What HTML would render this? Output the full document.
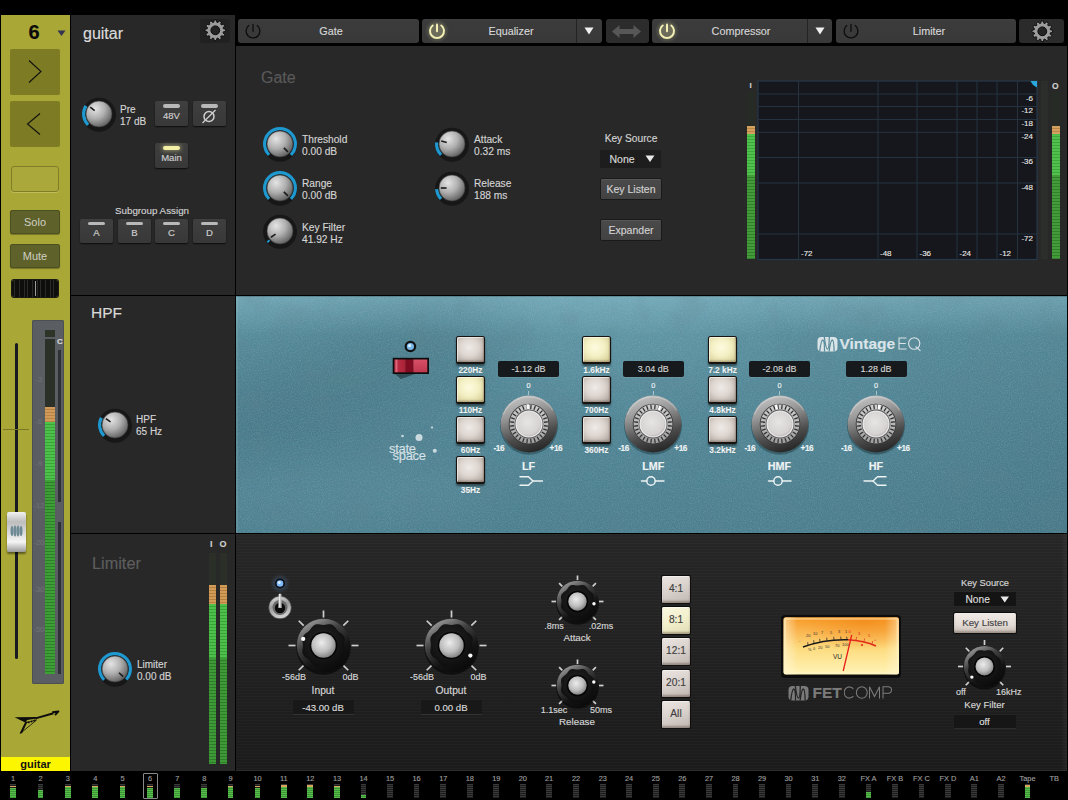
<!DOCTYPE html>
<html><head><meta charset="utf-8">
<style>
*{box-sizing:border-box;margin:0;padding:0}
html,body{width:1068px;height:800px;overflow:hidden;background:#000;font-family:"Liberation Sans",sans-serif}
.a{position:absolute}
.panel{position:absolute;background:#282828}
.strip{left:1px;top:15px;width:69px;height:742px;background:#a9a736}
.txt{position:absolute;white-space:nowrap;line-height:1;-webkit-text-stroke:0.15px currentColor}
</style></head>
<body>
<div class="panel" style="left:71px;top:15px;width:164px;height:280px"></div>
<div class="panel" style="left:71px;top:296px;width:164px;height:237px"></div>
<div class="panel" style="left:71px;top:534px;width:164px;height:237px"></div>
<div class="panel" style="left:236px;top:46px;width:831px;height:249px"></div>
<!-- LEFT STRIP -->
<div class="a strip"></div>
<div class="txt" style="left:22px;top:21.8px;width:24px;text-align:center;font-size:20px;font-weight:bold;color:#0a0a0a">6</div>
<svg class="a" style="left:57px;top:29.8px" width="9" height="7"><path d="M0.5 0.5 L8.5 0.5 L4.5 6 Z" fill="#353452"/></svg>
<div class="a" style="left:10px;top:49px;width:50px;height:46px;background:#7d7b24;border-radius:2px"></div>
<svg class="a" style="left:10px;top:49px" width="50" height="46"><path d="M19 11.5 L31 22.5 L19 33.5" fill="none" stroke="#111" stroke-width="1.1"/></svg>
<div class="a" style="left:10px;top:101px;width:50px;height:46px;background:#7d7b24;border-radius:2px"></div>
<svg class="a" style="left:10px;top:101px" width="50" height="46"><path d="M30 12.5 L17.5 23 L30 33.5" fill="none" stroke="#111" stroke-width="1.1"/></svg>
<div class="a" style="left:11px;top:166px;width:48px;height:26px;background:#aaa83a;border:1.5px solid #7f7d28;border-radius:3px;box-shadow:0 1px 0 rgba(255,255,200,.25)"></div>
<div class="a" style="left:10px;top:210px;width:50px;height:24px;background:#5e6129;border:1px solid #4c4f20;border-radius:2px;box-shadow:0 1px 1px rgba(0,0,0,.3);color:#cfd0c6;font-size:11px;text-align:center;line-height:22px">Solo</div>
<div class="a" style="left:10px;top:244px;width:50px;height:24px;background:#5e6129;border:1px solid #4c4f20;border-radius:2px;box-shadow:0 1px 1px rgba(0,0,0,.3);color:#cfd0c6;font-size:11px;text-align:center;line-height:22px">Mute</div>
<div class="a" style="left:12px;top:280px;width:46px;height:17px;background:repeating-linear-gradient(90deg,#0e0f0d 0,#0e0f0d 2px,#2a2b28 2px,#2a2b28 2.6px);border-radius:2px;box-shadow:0 0 0 1px #1a1a14"></div>
<div class="a" style="left:34.5px;top:281px;width:1.6px;height:15px;background:#9c9c9c"></div>
<!-- meter panel -->
<div class="a" style="left:32px;top:320px;width:32px;height:364px;background:#5a5d61;border-radius:2px;box-shadow:inset 0 0 0 1px #4c4f53"></div>
<div class="a" style="left:45px;top:330px;width:10px;height:7px;background:#2d3529"></div>
<div class="a" style="left:45px;top:339px;width:10px;height:68px;background:#2b3128"></div>
<div class="a" style="left:45px;top:407px;width:10px;height:15px;background:repeating-linear-gradient(#d19a58 0,#d19a58 2px,#b88446 2px,#b88446 3px)"></div>
<div class="a" style="left:45px;top:422px;width:10px;height:252px;background:repeating-linear-gradient(#4cc24a 0,#4cc24a 2px,#3ba33a 2px,#3ba33a 3px)"></div>
<div class="a" style="left:45px;top:480px;width:10px;height:194px;background:repeating-linear-gradient(#3f9f37 0,#3f9f37 2px,#2f7f2a 2px,#2f7f2a 3px)"></div>
<div class="txt" style="left:57px;top:338px;font-size:8px;font-weight:bold;color:#d8d8d8">C</div>
<div class="a" style="left:58px;top:350px;width:3px;height:152px;background:#2e3135"></div>
<div class="a" style="left:58px;top:522px;width:3px;height:152px;background:#2e3135"></div>
<div class="txt" style="left:35px;top:376px;font-size:8px;color:#6e7174">-3</div>
<div class="txt" style="left:35px;top:418px;font-size:8px;color:#6e7174">-6</div>
<div class="txt" style="left:35px;top:460px;font-size:8px;color:#6e7174">-9</div>
<div class="txt" style="left:33px;top:502px;font-size:8px;color:#6e7174">-12</div>
<div class="txt" style="left:33px;top:539px;font-size:8px;color:#6e7174">-20</div>
<div class="txt" style="left:33px;top:586px;font-size:8px;color:#6e7174">-30</div>
<div class="txt" style="left:33px;top:626px;font-size:8px;color:#6e7174">-50</div>
<!-- fader -->
<div class="a" style="left:15px;top:343px;width:3px;height:316px;background:#181a22;border-radius:1.5px"></div>
<div class="a" style="left:3px;top:429px;width:26px;height:1px;background:#7a7826"></div>
<div class="a" style="left:7px;top:512px;width:19px;height:40px;border-radius:2px;background:linear-gradient(#f2f2f2 0%,#bdbdbd 25%,#d8d8d8 50%,#f4f4f4 75%,#9a9a9a 100%);box-shadow:0 2px 2px rgba(0,0,0,.45)"></div>
<svg class="a" style="left:9px;top:524px" width="15" height="14"><g fill="#6f8c96"><ellipse cx="3" cy="7" rx="1.5" ry="5"/><ellipse cx="6" cy="7" rx="1.5" ry="5.5"/><ellipse cx="9" cy="7" rx="1.5" ry="5.5"/><ellipse cx="12" cy="7" rx="1.5" ry="5"/></g></svg>
<!-- guitar icon -->
<svg class="a" style="left:10px;top:705px" width="55" height="35" viewBox="0 0 55 35">
<path d="M4.6 12.3 L26.5 12.1 L26.8 13.6 L17.2 15 L15.2 17.6 Z" fill="#0d0d0d"/>
<path d="M15.2 17 L17.8 16.3 L12 28.3 L9.6 28.6 Z" fill="#0d0d0d"/>
<path d="M10.6 28.2 L26.6 15" fill="none" stroke="#0d0d0d" stroke-width="0.8"/>
<path d="M16.5 17.8 L26.6 14.8" fill="none" stroke="#0d0d0d" stroke-width="0.8"/>
<ellipse cx="18.8" cy="17.3" rx="0.9" ry="1.1" fill="#0d0d0d"/><ellipse cx="21.6" cy="16.5" rx="0.9" ry="1.1" fill="#0d0d0d"/><ellipse cx="24.4" cy="15.7" rx="0.9" ry="1.1" fill="#0d0d0d"/>
<path d="M25.5 13.4 L43.5 8.2" fill="none" stroke="#0d0d0d" stroke-width="2"/>
<path d="M42.3 7.2 L48.5 6.4 L45 10" fill="none" stroke="#0d0d0d" stroke-width="1.8" stroke-linejoin="round"/>
</svg>
<div class="a" style="left:1px;top:757px;width:69px;height:14px;background:#fcf600;color:#111;font-size:11px;font-weight:bold;text-align:center;line-height:15px">guitar</div>
<div class="txt" style="left:83px;top:26px;font-size:16px;color:#dcdcdc;">guitar</div>
<div class="a" style="left:200px;top:19px;width:30px;height:24px;background:#212121;border-radius:3px"></div>
<svg class="a" style="left:201.7px;top:17.2px" width="26.6" height="26.6"><polygon points="11.76,5.25 12.22,3.06 14.38,3.06 14.84,5.25 16.00,5.56 17.49,3.89 19.35,4.97 18.66,7.09 19.51,7.94 21.63,7.25 22.71,9.11 21.04,10.60 21.35,11.76 23.54,12.22 23.54,14.38 21.35,14.84 21.04,16.00 22.71,17.49 21.63,19.35 19.51,18.66 18.66,19.51 19.35,21.63 17.49,22.71 16.00,21.04 14.84,21.35 14.38,23.54 12.22,23.54 11.76,21.35 10.60,21.04 9.11,22.71 7.25,21.63 7.94,19.51 7.09,18.66 4.97,19.35 3.89,17.49 5.56,16.00 5.25,14.84 3.06,14.38 3.06,12.22 5.25,11.76 5.56,10.60 3.89,9.11 4.97,7.25 7.09,7.94 7.94,7.09 7.25,4.97 9.11,3.89 10.60,5.56" fill="#9c9c9c" stroke="#0c0c0c" stroke-width="0.9" stroke-linejoin="round"/><circle cx="13.3" cy="13.3" r="4.4" fill="#232323" stroke="#0c0c0c" stroke-width="1"/></svg>
<svg class="a" style="left:79.5px;top:95.0px" width="38" height="38"><defs><radialGradient id="kg1" cx="35%" cy="30%" r="75%"><stop offset="0" stop-color="#e4e4e4"/><stop offset="0.5" stop-color="#b0b0b0"/><stop offset="1" stop-color="#5e5e5e"/></radialGradient></defs><circle cx="19.0" cy="19.8" r="17" fill="#171717"/><path d="M8.11 29.89 A15.4 15.4 0 0 1 5.94 10.84" fill="none" stroke="#1f98cf" stroke-width="3.2"/><circle cx="19.0" cy="19.0" r="13" fill="url(#kg1)" stroke="#3a3a3a" stroke-width="0.6"/><line x1="14.70" y1="15.64" x2="10.19" y2="12.12" stroke="#1a1a1a" stroke-width="1.6"/></svg>
<div class="txt" style="left:120px;top:105px;font-size:10px;color:#d4d4d4;">Pre</div>
<div class="txt" style="left:120px;top:117px;font-size:10px;color:#d4d4d4;">17 dB</div>
<div class="a" style="left:155px;top:101px;width:33px;height:25px;background:linear-gradient(#3f3f3f,#383838);border-radius:2px;box-shadow:0 1px 1.5px rgba(0,0,0,.7)"></div>
<div class="a" style="left:163.0px;top:104.3px;width:17px;height:3.6px;background:#b9b9b9;border-radius:2px;"></div>
<div class="txt" style="left:71.5px;top:111px;font-size:9.5px;color:#cfcfcf;width:200px;text-align:center;">48V</div>
<div class="a" style="left:193px;top:101px;width:33px;height:25px;background:linear-gradient(#3f3f3f,#383838);border-radius:2px;box-shadow:0 1px 1.5px rgba(0,0,0,.7)"></div>
<div class="a" style="left:201.0px;top:104.3px;width:17px;height:3.6px;background:#b9b9b9;border-radius:2px;"></div>
<svg class="a" style="left:199px;top:108px" width="20" height="16"><circle cx="10" cy="8.5" r="5" fill="none" stroke="#cfcfcf" stroke-width="1.5"/><line x1="3.5" y1="15" x2="16.5" y2="2" stroke="#cfcfcf" stroke-width="1.3"/></svg><div class="a" style="left:155px;top:143px;width:33px;height:25px;background:linear-gradient(#3f3f3f,#383838);border-radius:2px;box-shadow:0 1px 1.5px rgba(0,0,0,.7)"></div>
<div class="a" style="left:163.0px;top:146.3px;width:17px;height:3.6px;background:#f3f1a6;border-radius:2px;box-shadow:0 0 4px 1px rgba(240,238,150,.45);"></div>
<div class="txt" style="left:71.5px;top:153px;font-size:9.5px;color:#cfcfcf;width:200px;text-align:center;">Main</div>
<div class="txt" style="left:52.0px;top:206px;font-size:9.8px;color:#d0d0d0;width:200px;text-align:center;">Subgroup Assign</div>
<div class="a" style="left:80px;top:218.5px;width:33px;height:24px;background:linear-gradient(#3f3f3f,#383838);border-radius:2px;box-shadow:0 1px 1.5px rgba(0,0,0,.7)"></div>
<div class="a" style="left:88.0px;top:221.8px;width:17px;height:3.6px;background:#b9b9b9;border-radius:2px;"></div>
<div class="txt" style="left:-3.5px;top:227.5px;font-size:9.6px;color:#cfcfcf;width:200px;text-align:center;">A</div>
<div class="a" style="left:118px;top:218.5px;width:33px;height:24px;background:linear-gradient(#3f3f3f,#383838);border-radius:2px;box-shadow:0 1px 1.5px rgba(0,0,0,.7)"></div>
<div class="a" style="left:126.0px;top:221.8px;width:17px;height:3.6px;background:#b9b9b9;border-radius:2px;"></div>
<div class="txt" style="left:34.5px;top:227.5px;font-size:9.6px;color:#cfcfcf;width:200px;text-align:center;">B</div>
<div class="a" style="left:155px;top:218.5px;width:33px;height:24px;background:linear-gradient(#3f3f3f,#383838);border-radius:2px;box-shadow:0 1px 1.5px rgba(0,0,0,.7)"></div>
<div class="a" style="left:163.0px;top:221.8px;width:17px;height:3.6px;background:#b9b9b9;border-radius:2px;"></div>
<div class="txt" style="left:71.5px;top:227.5px;font-size:9.6px;color:#cfcfcf;width:200px;text-align:center;">C</div>
<div class="a" style="left:193px;top:218.5px;width:33px;height:24px;background:linear-gradient(#3f3f3f,#383838);border-radius:2px;box-shadow:0 1px 1.5px rgba(0,0,0,.7)"></div>
<div class="a" style="left:201.0px;top:221.8px;width:17px;height:3.6px;background:#b9b9b9;border-radius:2px;"></div>
<div class="txt" style="left:109.5px;top:227.5px;font-size:9.6px;color:#cfcfcf;width:200px;text-align:center;">D</div>
<div class="txt" style="left:91px;top:305px;font-size:15.5px;color:#d8d8d8;">HPF</div>
<svg class="a" style="left:95.5px;top:406.0px" width="38" height="38"><defs><radialGradient id="kg2" cx="35%" cy="30%" r="75%"><stop offset="0" stop-color="#e4e4e4"/><stop offset="0.5" stop-color="#b0b0b0"/><stop offset="1" stop-color="#5e5e5e"/></radialGradient></defs><circle cx="19.0" cy="19.8" r="17" fill="#171717"/><path d="M8.11 29.89 A15.4 15.4 0 0 1 5.40 11.77" fill="none" stroke="#1f98cf" stroke-width="3.2"/><circle cx="19.0" cy="19.0" r="13" fill="url(#kg2)" stroke="#3a3a3a" stroke-width="0.6"/><line x1="14.53" y1="15.87" x2="9.84" y2="12.59" stroke="#1a1a1a" stroke-width="1.6"/></svg>
<div class="txt" style="left:136px;top:415px;font-size:10px;color:#d4d4d4;">HPF</div>
<div class="txt" style="left:136px;top:427px;font-size:10px;color:#d4d4d4;">65 Hz</div>
<div class="txt" style="left:92px;top:554.5px;font-size:16.3px;color:#5e5e5e;">Limiter</div>
<svg class="a" style="left:96.0px;top:650.0px" width="38" height="38"><defs><radialGradient id="kg3" cx="35%" cy="30%" r="75%"><stop offset="0" stop-color="#e4e4e4"/><stop offset="0.5" stop-color="#b0b0b0"/><stop offset="1" stop-color="#5e5e5e"/></radialGradient></defs><circle cx="19.0" cy="19.8" r="17" fill="#171717"/><path d="M8.11 29.89 A15.4 15.4 0 1 1 30.26 29.50" fill="none" stroke="#1f98cf" stroke-width="3.2"/><circle cx="19.0" cy="19.0" r="13" fill="url(#kg3)" stroke="#3a3a3a" stroke-width="0.6"/><line x1="22.99" y1="22.72" x2="27.18" y2="26.62" stroke="#1a1a1a" stroke-width="1.6"/></svg>
<div class="txt" style="left:137px;top:660px;font-size:10px;color:#d4d4d4;">Limiter</div>
<div class="txt" style="left:137px;top:672px;font-size:10px;color:#d4d4d4;">0.00 dB</div>
<div class="txt" style="left:210px;top:540px;font-size:9px;color:#cfcfcf;font-weight:bold;">I</div>
<div class="txt" style="left:219.5px;top:540px;font-size:9px;color:#cfcfcf;font-weight:bold;">O</div>
<div class="a" style="left:209px;top:553px;width:7px;height:211px;background:#2a3027"></div>
<div class="a" style="left:209px;top:585px;width:7px;height:19px;background:repeating-linear-gradient(#d29b58 0,#d29b58 2px,#b5813f 2px,#b5813f 3px)"></div>
<div class="a" style="left:209px;top:604px;width:7px;height:54px;background:repeating-linear-gradient(#4cc04a 0,#4cc04a 2px,#3aa238 2px,#3aa238 3px)"></div>
<div class="a" style="left:209px;top:658px;width:7px;height:106px;background:repeating-linear-gradient(#3e9a36 0,#3e9a36 2px,#2e7c2a 2px,#2e7c2a 3px)"></div>
<div class="a" style="left:220px;top:553px;width:7px;height:211px;background:#2a3027"></div>
<div class="a" style="left:220px;top:585px;width:7px;height:19px;background:repeating-linear-gradient(#d29b58 0,#d29b58 2px,#b5813f 2px,#b5813f 3px)"></div>
<div class="a" style="left:220px;top:604px;width:7px;height:54px;background:repeating-linear-gradient(#4cc04a 0,#4cc04a 2px,#3aa238 2px,#3aa238 3px)"></div>
<div class="a" style="left:220px;top:658px;width:7px;height:106px;background:repeating-linear-gradient(#3e9a36 0,#3e9a36 2px,#2e7c2a 2px,#2e7c2a 3px)"></div>
<div class="a" style="left:238px;top:18.5px;width:181px;height:24.5px;background:linear-gradient(#414141 0,#3b3b3b 2px,#393939 100%);border-radius:3px"></div>
<svg class="a" style="left:241px;top:19px" width="24" height="24"><path d="M16.25 6.56 A6.9 6.9 0 1 1 7.75 6.56" fill="none" stroke="#0e0e0e" stroke-width="1.35" stroke-linecap="round"/><line x1="12" y1="5.5" x2="12" y2="12.3" stroke="#0e0e0e" stroke-width="1.35" stroke-linecap="round"/></svg>
<div class="txt" style="left:231.0px;top:25.5px;font-size:10.8px;color:#d6d6d6;width:200px;text-align:center;">Gate</div>
<div class="a" style="left:422px;top:18.5px;width:180px;height:24.5px;background:linear-gradient(#414141 0,#3b3b3b 2px,#393939 100%);border-radius:3px"></div>
<svg class="a" style="left:425px;top:19px" width="24" height="24"><defs><radialGradient id="pg437"><stop offset="0.4" stop-color="#f0eeb0" stop-opacity="0.28"/><stop offset="1" stop-color="#f0eeb0" stop-opacity="0"/></radialGradient></defs><circle cx="12" cy="12" r="12" fill="url(#pg437)"/><path d="M16.31 6.48 A7.0 7.0 0 1 1 7.69 6.48" fill="none" stroke="#f2f0b4" stroke-width="2.0" stroke-linecap="round"/><line x1="12" y1="5.4" x2="12" y2="12.3" stroke="#f2f0b4" stroke-width="2.0" stroke-linecap="round"/></svg>
<div class="txt" style="left:411.0px;top:25.5px;font-size:10.8px;color:#d6d6d6;width:200px;text-align:center;">Equalizer</div>
<div class="a" style="left:576px;top:18.5px;width:1px;height:24.5px;background:#232323"></div>
<svg class="a" style="left:584px;top:27px" width="10" height="8"><path d="M0.5 0.5 L9.5 0.5 L5 7.5 Z" fill="#f0f0f0"/></svg>
<div class="a" style="left:606px;top:18.5px;width:43px;height:24.5px;background:#2c2c2c;border-radius:3px"></div>
<svg class="a" style="left:611px;top:24px" width="32" height="15"><path d="M1 7.5 L8.5 1 L8.5 5 L22.5 5 L22.5 1 L30 7.5 L22.5 14 L22.5 10 L8.5 10 L8.5 14 Z" fill="#575757"/></svg>
<div class="a" style="left:652px;top:18.5px;width:180px;height:24.5px;background:linear-gradient(#414141 0,#3b3b3b 2px,#393939 100%);border-radius:3px"></div>
<svg class="a" style="left:655px;top:19px" width="24" height="24"><defs><radialGradient id="pg667"><stop offset="0.4" stop-color="#f0eeb0" stop-opacity="0.28"/><stop offset="1" stop-color="#f0eeb0" stop-opacity="0"/></radialGradient></defs><circle cx="12" cy="12" r="12" fill="url(#pg667)"/><path d="M16.31 6.48 A7.0 7.0 0 1 1 7.69 6.48" fill="none" stroke="#f2f0b4" stroke-width="2.0" stroke-linecap="round"/><line x1="12" y1="5.4" x2="12" y2="12.3" stroke="#f2f0b4" stroke-width="2.0" stroke-linecap="round"/></svg>
<div class="txt" style="left:641.0px;top:25.5px;font-size:10.8px;color:#d6d6d6;width:200px;text-align:center;">Compressor</div>
<div class="a" style="left:807px;top:18.5px;width:1px;height:24.5px;background:#232323"></div>
<svg class="a" style="left:815px;top:27px" width="10" height="8"><path d="M0.5 0.5 L9.5 0.5 L5 7.5 Z" fill="#f0f0f0"/></svg>
<div class="a" style="left:836px;top:18.5px;width:180px;height:24.5px;background:linear-gradient(#414141 0,#3b3b3b 2px,#393939 100%);border-radius:3px"></div>
<svg class="a" style="left:839px;top:19px" width="24" height="24"><path d="M16.25 6.56 A6.9 6.9 0 1 1 7.75 6.56" fill="none" stroke="#0e0e0e" stroke-width="1.35" stroke-linecap="round"/><line x1="12" y1="5.5" x2="12" y2="12.3" stroke="#0e0e0e" stroke-width="1.35" stroke-linecap="round"/></svg>
<div class="txt" style="left:829.0px;top:25.5px;font-size:10.8px;color:#d6d6d6;width:200px;text-align:center;">Limiter</div>
<div class="a" style="left:1019px;top:18.5px;width:45px;height:24.5px;background:#2b2b2b;border-radius:3px"></div>
<svg class="a" style="left:1028.7px;top:17.7px" width="26.6" height="26.6"><polygon points="11.76,5.25 12.22,3.06 14.38,3.06 14.84,5.25 16.00,5.56 17.49,3.89 19.35,4.97 18.66,7.09 19.51,7.94 21.63,7.25 22.71,9.11 21.04,10.60 21.35,11.76 23.54,12.22 23.54,14.38 21.35,14.84 21.04,16.00 22.71,17.49 21.63,19.35 19.51,18.66 18.66,19.51 19.35,21.63 17.49,22.71 16.00,21.04 14.84,21.35 14.38,23.54 12.22,23.54 11.76,21.35 10.60,21.04 9.11,22.71 7.25,21.63 7.94,19.51 7.09,18.66 4.97,19.35 3.89,17.49 5.56,16.00 5.25,14.84 3.06,14.38 3.06,12.22 5.25,11.76 5.56,10.60 3.89,9.11 4.97,7.25 7.09,7.94 7.94,7.09 7.25,4.97 9.11,3.89 10.60,5.56" fill="#9c9c9c" stroke="#0c0c0c" stroke-width="0.9" stroke-linejoin="round"/><circle cx="13.3" cy="13.3" r="4.4" fill="#232323" stroke="#0c0c0c" stroke-width="1"/></svg>
<div class="txt" style="left:261px;top:70px;font-size:16px;color:#5a5a5a;">Gate</div>
<svg class="a" style="left:261.0px;top:124.5px" width="38" height="38"><defs><radialGradient id="kg4" cx="35%" cy="30%" r="75%"><stop offset="0" stop-color="#e4e4e4"/><stop offset="0.5" stop-color="#b0b0b0"/><stop offset="1" stop-color="#5e5e5e"/></radialGradient></defs><circle cx="19.0" cy="19.8" r="17" fill="#171717"/><path d="M8.11 29.89 A15.4 15.4 0 1 1 29.89 29.89" fill="none" stroke="#1f98cf" stroke-width="3.2"/><circle cx="19.0" cy="19.0" r="13" fill="url(#kg4)" stroke="#3a3a3a" stroke-width="0.6"/><line x1="22.86" y1="22.86" x2="26.91" y2="26.91" stroke="#1a1a1a" stroke-width="1.6"/></svg>
<div class="txt" style="left:302px;top:135px;font-size:10.2px;color:#d4d4d4;">Threshold</div>
<div class="txt" style="left:302px;top:147px;font-size:10.2px;color:#d4d4d4;">0.00 dB</div>
<svg class="a" style="left:261.0px;top:168.5px" width="38" height="38"><defs><radialGradient id="kg5" cx="35%" cy="30%" r="75%"><stop offset="0" stop-color="#e4e4e4"/><stop offset="0.5" stop-color="#b0b0b0"/><stop offset="1" stop-color="#5e5e5e"/></radialGradient></defs><circle cx="19.0" cy="19.8" r="17" fill="#171717"/><path d="M8.11 29.89 A15.4 15.4 0 1 1 29.89 29.89" fill="none" stroke="#1f98cf" stroke-width="3.2"/><circle cx="19.0" cy="19.0" r="13" fill="url(#kg5)" stroke="#3a3a3a" stroke-width="0.6"/><line x1="22.86" y1="22.86" x2="26.91" y2="26.91" stroke="#1a1a1a" stroke-width="1.6"/></svg>
<div class="txt" style="left:302px;top:179px;font-size:10.2px;color:#d4d4d4;">Range</div>
<div class="txt" style="left:302px;top:191px;font-size:10.2px;color:#d4d4d4;">0.00 dB</div>
<svg class="a" style="left:260.5px;top:212.0px" width="38" height="38"><defs><radialGradient id="kg6" cx="35%" cy="30%" r="75%"><stop offset="0" stop-color="#e4e4e4"/><stop offset="0.5" stop-color="#b0b0b0"/><stop offset="1" stop-color="#5e5e5e"/></radialGradient></defs><circle cx="19.0" cy="19.8" r="17" fill="#171717"/><path d="M8.11 29.89 A15.4 15.4 0 0 1 6.86 28.48" fill="none" stroke="#1f98cf" stroke-width="3.2"/><circle cx="19.0" cy="19.0" r="13" fill="url(#kg6)" stroke="#3a3a3a" stroke-width="0.6"/><line x1="14.53" y1="22.13" x2="9.84" y2="25.41" stroke="#1a1a1a" stroke-width="1.6"/></svg>
<div class="txt" style="left:302px;top:223px;font-size:10.2px;color:#d4d4d4;">Key Filter</div>
<div class="txt" style="left:302px;top:235px;font-size:10.2px;color:#d4d4d4;">41.92 Hz</div>
<svg class="a" style="left:433.0px;top:124.5px" width="38" height="38"><defs><radialGradient id="kg7" cx="35%" cy="30%" r="75%"><stop offset="0" stop-color="#e4e4e4"/><stop offset="0.5" stop-color="#b0b0b0"/><stop offset="1" stop-color="#5e5e5e"/></radialGradient></defs><circle cx="19.0" cy="19.8" r="17" fill="#171717"/><path d="M8.11 29.89 A15.4 15.4 0 0 1 3.68 17.39" fill="none" stroke="#1f98cf" stroke-width="3.2"/><circle cx="19.0" cy="19.0" r="13" fill="url(#kg7)" stroke="#3a3a3a" stroke-width="0.6"/><line x1="13.75" y1="17.50" x2="8.25" y2="15.92" stroke="#1a1a1a" stroke-width="1.6"/></svg>
<div class="txt" style="left:474px;top:135px;font-size:10.2px;color:#d4d4d4;">Attack</div>
<div class="txt" style="left:474px;top:147px;font-size:10.2px;color:#d4d4d4;">0.32 ms</div>
<svg class="a" style="left:433.0px;top:168.5px" width="38" height="38"><defs><radialGradient id="kg8" cx="35%" cy="30%" r="75%"><stop offset="0" stop-color="#e4e4e4"/><stop offset="0.5" stop-color="#b0b0b0"/><stop offset="1" stop-color="#5e5e5e"/></radialGradient></defs><circle cx="19.0" cy="19.8" r="17" fill="#171717"/><path d="M8.11 29.89 A15.4 15.4 0 0 1 3.64 20.07" fill="none" stroke="#1f98cf" stroke-width="3.2"/><circle cx="19.0" cy="19.0" r="13" fill="url(#kg8)" stroke="#3a3a3a" stroke-width="0.6"/><line x1="13.54" y1="19.00" x2="7.82" y2="19.00" stroke="#1a1a1a" stroke-width="1.6"/></svg>
<div class="txt" style="left:474px;top:179px;font-size:10.2px;color:#d4d4d4;">Release</div>
<div class="txt" style="left:474px;top:191px;font-size:10.2px;color:#d4d4d4;">188 ms</div>
<div class="txt" style="left:531.0px;top:133.5px;font-size:10.2px;color:#d4d4d4;width:200px;text-align:center;">Key Source</div>
<div class="a" style="left:600px;top:150px;width:61px;height:18px;background:#1d1d1d;border-radius:2px"></div>
<div class="txt" style="left:609.5px;top:154px;font-size:10.5px;color:#d8d8d8;">None</div>
<svg class="a" style="left:645px;top:155px" width="10" height="8"><path d="M0.5 0.5 L9.5 0.5 L5 7 Z" fill="#e8e8e8"/></svg>
<div class="a" style="left:599.5px;top:177.5px;width:62px;height:22.5px;background:linear-gradient(#4a4a4a,#424242);border:1px solid #1a1a1a;border-radius:2px;box-shadow:inset 0 1px 0 #575757"></div>
<div class="txt" style="left:531.0px;top:183.5px;font-size:10.5px;color:#d2d2d2;width:200px;text-align:center;">Key Listen</div>
<div class="a" style="left:599.5px;top:218.5px;width:62px;height:22.5px;background:linear-gradient(#4a4a4a,#424242);border:1px solid #1a1a1a;border-radius:2px;box-shadow:inset 0 1px 0 #575757"></div>
<div class="txt" style="left:531.0px;top:224.5px;font-size:10.5px;color:#d2d2d2;width:200px;text-align:center;">Expander</div>
<svg class="a" style="left:757px;top:80px" width="281" height="181"><rect x="1" y="1" width="279" height="178.5" fill="#15171c" stroke="#26384a" stroke-width="1.2"/><line x1="41.5" y1="1" x2="41.5" y2="179.5" stroke="#253340" stroke-width="1"/><line x1="121" y1="1" x2="121" y2="179.5" stroke="#253340" stroke-width="1"/><line x1="160" y1="1" x2="160" y2="179.5" stroke="#253340" stroke-width="1"/><line x1="200" y1="1" x2="200" y2="179.5" stroke="#253340" stroke-width="1"/><line x1="220" y1="1" x2="220" y2="179.5" stroke="#253340" stroke-width="1"/><line x1="240" y1="1" x2="240" y2="179.5" stroke="#253340" stroke-width="1"/><line x1="260.5" y1="1" x2="260.5" y2="179.5" stroke="#253340" stroke-width="1"/><line x1="1" y1="14" x2="280" y2="14" stroke="#253340" stroke-width="1"/><line x1="1" y1="26.5" x2="280" y2="26.5" stroke="#253340" stroke-width="1"/><line x1="1" y1="39.5" x2="280" y2="39.5" stroke="#253340" stroke-width="1"/><line x1="1" y1="52.30000000000001" x2="280" y2="52.30000000000001" stroke="#253340" stroke-width="1"/><line x1="1" y1="77.5" x2="280" y2="77.5" stroke="#253340" stroke-width="1"/><line x1="1" y1="103" x2="280" y2="103" stroke="#253340" stroke-width="1"/><line x1="1" y1="154" x2="280" y2="154" stroke="#253340" stroke-width="1"/><path d="M273.5 1 L280 1 L280 7.5 Q275.5 5.5 273.5 1 Z" fill="#2aa7dd"/></svg>
<div class="txt" style="left:933px;top:94.6px;font-size:8px;color:#e8e8e8;width:100px;text-align:right;text-shadow:0 0 1px #000">-6</div>
<div class="txt" style="left:933px;top:107.3px;font-size:8px;color:#e8e8e8;width:100px;text-align:right;text-shadow:0 0 1px #000">-12</div>
<div class="txt" style="left:933px;top:120.39999999999999px;font-size:8px;color:#e8e8e8;width:100px;text-align:right;text-shadow:0 0 1px #000">-18</div>
<div class="txt" style="left:933px;top:132.79999999999998px;font-size:8px;color:#e8e8e8;width:100px;text-align:right;text-shadow:0 0 1px #000">-24</div>
<div class="txt" style="left:933px;top:157.79999999999998px;font-size:8px;color:#e8e8e8;width:100px;text-align:right;text-shadow:0 0 1px #000">-36</div>
<div class="txt" style="left:933px;top:183.6px;font-size:8px;color:#e8e8e8;width:100px;text-align:right;text-shadow:0 0 1px #000">-48</div>
<div class="txt" style="left:933px;top:234.6px;font-size:8px;color:#e8e8e8;width:100px;text-align:right;text-shadow:0 0 1px #000">-72</div>
<div class="txt" style="left:801px;top:249.6px;font-size:8px;color:#e8e8e8;text-shadow:0 0 1px #000">-72</div>
<div class="txt" style="left:880px;top:249.6px;font-size:8px;color:#e8e8e8;text-shadow:0 0 1px #000">-48</div>
<div class="txt" style="left:919.5px;top:249.6px;font-size:8px;color:#e8e8e8;text-shadow:0 0 1px #000">-36</div>
<div class="txt" style="left:959.5px;top:249.6px;font-size:8px;color:#e8e8e8;text-shadow:0 0 1px #000">-24</div>
<div class="txt" style="left:999.5px;top:249.6px;font-size:8px;color:#e8e8e8;text-shadow:0 0 1px #000">-12</div>
<div class="txt" style="left:749.5px;top:81.5px;font-size:8px;color:#cfcfcf;font-weight:bold;">I</div>
<div class="a" style="left:747px;top:92px;width:8px;height:167px;background:#272b26"></div>
<div class="a" style="left:747px;top:126px;width:8px;height:8px;background:repeating-linear-gradient(#d4a060 0,#d4a060 2px,#b88745 2px,#b88745 3px)"></div>
<div class="a" style="left:747px;top:134px;width:8px;height:41px;background:repeating-linear-gradient(#4fc14c 0,#4fc14c 2px,#3ea63b 2px,#3ea63b 3px)"></div>
<div class="a" style="left:747px;top:175px;width:8px;height:84px;background:repeating-linear-gradient(#439c39 0,#439c39 2px,#327f2c 2px,#327f2c 3px)"></div>
<div class="a" style="left:1041px;top:81px;width:7px;height:178px;background:#2b2e2a"></div>
<div class="txt" style="left:1052px;top:81.5px;font-size:8.5px;color:#cfcfcf;font-weight:bold;">O</div>
<div class="a" style="left:1051.5px;top:92px;width:8px;height:167px;background:#272b26"></div>
<div class="a" style="left:1051.5px;top:126px;width:8px;height:8px;background:repeating-linear-gradient(#d4a060 0,#d4a060 2px,#b88745 2px,#b88745 3px)"></div>
<div class="a" style="left:1051.5px;top:134px;width:8px;height:41px;background:repeating-linear-gradient(#4fc14c 0,#4fc14c 2px,#3ea63b 2px,#3ea63b 3px)"></div>
<div class="a" style="left:1051.5px;top:175px;width:8px;height:84px;background:repeating-linear-gradient(#439c39 0,#439c39 2px,#327f2c 2px,#327f2c 3px)"></div>
<div class="a" style="left:236px;top:296px;width:831px;height:237px;overflow:hidden;background:linear-gradient(180deg,#6299a8 0%,#578e9d 16%,#508595 55%,#4b7f8f 100%)"><div class="a" style="left:0;top:0;width:831px;height:237px;background:linear-gradient(90deg,rgba(0,0,0,0) 0%,rgba(0,0,0,0) 62%,rgba(10,30,40,.07) 100%)"></div><div class="a" style="left:0;top:0;width:831px;height:40px;background:linear-gradient(180deg,rgba(160,210,222,.22),rgba(160,210,222,0))"></div><div class="a" style="left:-80px;top:30px;width:380px;height:110px;border-radius:50%;background:rgba(25,55,68,.15);filter:blur(30px);transform:rotate(-18deg)"></div><div class="a" style="left:220px;top:-30px;width:300px;height:110px;border-radius:50%;background:rgba(150,205,220,.12);filter:blur(30px)"></div><div class="a" style="left:-40px;top:170px;width:300px;height:60px;border-radius:50%;background:rgba(160,210,222,.08);filter:blur(20px)"></div><svg class="a" style="left:0;top:0" width="831" height="237"><filter id="eqn" x="0" y="0" width="100%" height="100%"><feTurbulence type="fractalNoise" baseFrequency="0.9" numOctaves="2" seed="3"/><feColorMatrix values="0 0 0 0 0.55  0 0 0 0 0.62  0 0 0 0 0.66  0 0 0 1.4 -0.55"/></filter><rect width="831" height="237" filter="url(#eqn)" opacity="0.3"/></svg><svg class="a" style="left:0;top:0" width="831" height="237"><filter id="eqm" x="0" y="0" width="100%" height="100%"><feTurbulence type="fractalNoise" baseFrequency="0.03" numOctaves="3" seed="7"/><feColorMatrix values="0 0 0 0 0.12  0 0 0 0 0.22  0 0 0 0 0.27  0 0 0 2.4 -1.15"/></filter><rect width="831" height="237" filter="url(#eqm)" opacity="0.25"/></svg></div>
<div class="a" style="left:236px;top:296px;width:831px;height:1px;background:rgba(0,0,0,.18)"></div>
<div class="a" style="left:236px;top:297px;width:2px;height:235px;background:rgba(200,230,235,.12)"></div>
<svg class="a" style="left:388px;top:338px" width="50" height="45"><circle cx="22.4" cy="8.5" r="5.8" fill="#0f1112"/><circle cx="22.4" cy="8.5" r="3.6" fill="#78b6e6"/><circle cx="21.6" cy="7.6" r="1.6" fill="#d8f0ff"/><path d="M7 36 L27 36 L13 41 Z" fill="rgba(20,40,45,.55)"/><rect x="4.7" y="19.8" width="36.3" height="16.2" fill="#0d0d0d"/><defs><linearGradient id="tgl" x1="0" y1="0" x2="1" y2="0"><stop offset="0" stop-color="#a01e34"/><stop offset="0.18" stop-color="#e06a7e"/><stop offset="0.35" stop-color="#b82a42"/><stop offset="1" stop-color="#a82238"/></linearGradient><linearGradient id="tgr" x1="0" y1="0" x2="0" y2="1"><stop offset="0" stop-color="#d85068"/><stop offset="1" stop-color="#c03850"/></linearGradient></defs><rect x="6.3" y="21.5" width="11.5" height="12.8" fill="url(#tgl)"/><rect x="17.8" y="21.5" width="7.5" height="12.8" fill="#800c22"/><rect x="25.3" y="21.5" width="14" height="12.8" fill="url(#tgr)"/></svg>
<svg class="a" style="left:385px;top:420px" width="60" height="45"><g fill="#dfe9ec" fill-opacity=".85"><circle cx="17.5" cy="16" r="1.3"/><circle cx="34" cy="17.5" r="3.5"/><circle cx="47" cy="7.5" r="1.1"/><circle cx="49.8" cy="30.8" r="2"/></g></svg>
<div class="txt" style="left:389px;top:441.5px;font-size:13px;color:rgba(225,236,240,.88);letter-spacing:-0.3px">state</div>
<div class="txt" style="left:392.5px;top:449px;font-size:13px;color:rgba(225,236,240,.88);letter-spacing:-0.3px">space</div>
<div class="a" style="left:456px;top:336px;width:29px;height:28px;background:#171310;border-radius:2.5px;box-shadow:0 1.5px 2px rgba(0,0,0,.45)"></div>
<div class="a" style="left:457.3px;top:337.1px;width:26.4px;height:24.8px;background:radial-gradient(ellipse 70% 70% at 45% 42%,#efebe8 0%,#ddd5cf 50%,#b3a9a2 100%);border-radius:1.5px;box-shadow:inset 1px 1px 0 rgba(255,255,255,.55),inset -1px -1.5px 1.5px rgba(60,40,30,.3)"></div>
<div class="txt" style="left:370.5px;top:365.6px;font-size:8.3px;color:#eef3f4;font-weight:bold;width:200px;text-align:center;text-shadow:0 0 1px rgba(0,0,0,.35)">220Hz</div>
<div class="a" style="left:456px;top:376px;width:29px;height:28px;background:#171310;border-radius:2.5px;box-shadow:0 1.5px 2px rgba(0,0,0,.45)"></div>
<div class="a" style="left:457.3px;top:377.1px;width:26.4px;height:24.8px;background:radial-gradient(ellipse 70% 70% at 45% 42%,#fdfbe0 0%,#f4f0c4 50%,#d8d09a 100%);border-radius:1.5px;box-shadow:inset 1px 1px 0 rgba(255,255,255,.55),inset -1px -1.5px 1.5px rgba(60,40,30,.3)"></div>
<div class="txt" style="left:370.5px;top:405.6px;font-size:8.3px;color:#eef3f4;font-weight:bold;width:200px;text-align:center;text-shadow:0 0 1px rgba(0,0,0,.35)">110Hz</div>
<div class="a" style="left:456px;top:416px;width:29px;height:28px;background:#171310;border-radius:2.5px;box-shadow:0 1.5px 2px rgba(0,0,0,.45)"></div>
<div class="a" style="left:457.3px;top:417.1px;width:26.4px;height:24.8px;background:radial-gradient(ellipse 70% 70% at 45% 42%,#efebe8 0%,#ddd5cf 50%,#b3a9a2 100%);border-radius:1.5px;box-shadow:inset 1px 1px 0 rgba(255,255,255,.55),inset -1px -1.5px 1.5px rgba(60,40,30,.3)"></div>
<div class="txt" style="left:370.5px;top:445.6px;font-size:8.3px;color:#eef3f4;font-weight:bold;width:200px;text-align:center;text-shadow:0 0 1px rgba(0,0,0,.35)">60Hz</div>
<div class="a" style="left:456px;top:456px;width:29px;height:28px;background:#171310;border-radius:2.5px;box-shadow:0 1.5px 2px rgba(0,0,0,.45)"></div>
<div class="a" style="left:457.3px;top:457.1px;width:26.4px;height:24.8px;background:radial-gradient(ellipse 70% 70% at 45% 42%,#efebe8 0%,#ddd5cf 50%,#b3a9a2 100%);border-radius:1.5px;box-shadow:inset 1px 1px 0 rgba(255,255,255,.55),inset -1px -1.5px 1.5px rgba(60,40,30,.3)"></div>
<div class="txt" style="left:370.5px;top:485.6px;font-size:8.3px;color:#eef3f4;font-weight:bold;width:200px;text-align:center;text-shadow:0 0 1px rgba(0,0,0,.35)">35Hz</div>
<div class="a" style="left:582px;top:336px;width:29px;height:28px;background:#171310;border-radius:2.5px;box-shadow:0 1.5px 2px rgba(0,0,0,.45)"></div>
<div class="a" style="left:583.3px;top:337.1px;width:26.4px;height:24.8px;background:radial-gradient(ellipse 70% 70% at 45% 42%,#fdfbe0 0%,#f4f0c4 50%,#d8d09a 100%);border-radius:1.5px;box-shadow:inset 1px 1px 0 rgba(255,255,255,.55),inset -1px -1.5px 1.5px rgba(60,40,30,.3)"></div>
<div class="txt" style="left:496.5px;top:365.6px;font-size:8.3px;color:#eef3f4;font-weight:bold;width:200px;text-align:center;text-shadow:0 0 1px rgba(0,0,0,.35)">1.6kHz</div>
<div class="a" style="left:582px;top:376px;width:29px;height:28px;background:#171310;border-radius:2.5px;box-shadow:0 1.5px 2px rgba(0,0,0,.45)"></div>
<div class="a" style="left:583.3px;top:377.1px;width:26.4px;height:24.8px;background:radial-gradient(ellipse 70% 70% at 45% 42%,#efebe8 0%,#ddd5cf 50%,#b3a9a2 100%);border-radius:1.5px;box-shadow:inset 1px 1px 0 rgba(255,255,255,.55),inset -1px -1.5px 1.5px rgba(60,40,30,.3)"></div>
<div class="txt" style="left:496.5px;top:405.6px;font-size:8.3px;color:#eef3f4;font-weight:bold;width:200px;text-align:center;text-shadow:0 0 1px rgba(0,0,0,.35)">700Hz</div>
<div class="a" style="left:582px;top:416px;width:29px;height:28px;background:#171310;border-radius:2.5px;box-shadow:0 1.5px 2px rgba(0,0,0,.45)"></div>
<div class="a" style="left:583.3px;top:417.1px;width:26.4px;height:24.8px;background:radial-gradient(ellipse 70% 70% at 45% 42%,#efebe8 0%,#ddd5cf 50%,#b3a9a2 100%);border-radius:1.5px;box-shadow:inset 1px 1px 0 rgba(255,255,255,.55),inset -1px -1.5px 1.5px rgba(60,40,30,.3)"></div>
<div class="txt" style="left:496.5px;top:445.6px;font-size:8.3px;color:#eef3f4;font-weight:bold;width:200px;text-align:center;text-shadow:0 0 1px rgba(0,0,0,.35)">360Hz</div>
<div class="a" style="left:708px;top:336px;width:29px;height:28px;background:#171310;border-radius:2.5px;box-shadow:0 1.5px 2px rgba(0,0,0,.45)"></div>
<div class="a" style="left:709.3px;top:337.1px;width:26.4px;height:24.8px;background:radial-gradient(ellipse 70% 70% at 45% 42%,#fdfbe0 0%,#f4f0c4 50%,#d8d09a 100%);border-radius:1.5px;box-shadow:inset 1px 1px 0 rgba(255,255,255,.55),inset -1px -1.5px 1.5px rgba(60,40,30,.3)"></div>
<div class="txt" style="left:622.5px;top:365.6px;font-size:8.3px;color:#eef3f4;font-weight:bold;width:200px;text-align:center;text-shadow:0 0 1px rgba(0,0,0,.35)">7.2 kHz</div>
<div class="a" style="left:708px;top:376px;width:29px;height:28px;background:#171310;border-radius:2.5px;box-shadow:0 1.5px 2px rgba(0,0,0,.45)"></div>
<div class="a" style="left:709.3px;top:377.1px;width:26.4px;height:24.8px;background:radial-gradient(ellipse 70% 70% at 45% 42%,#efebe8 0%,#ddd5cf 50%,#b3a9a2 100%);border-radius:1.5px;box-shadow:inset 1px 1px 0 rgba(255,255,255,.55),inset -1px -1.5px 1.5px rgba(60,40,30,.3)"></div>
<div class="txt" style="left:622.5px;top:405.6px;font-size:8.3px;color:#eef3f4;font-weight:bold;width:200px;text-align:center;text-shadow:0 0 1px rgba(0,0,0,.35)">4.8kHz</div>
<div class="a" style="left:708px;top:416px;width:29px;height:28px;background:#171310;border-radius:2.5px;box-shadow:0 1.5px 2px rgba(0,0,0,.45)"></div>
<div class="a" style="left:709.3px;top:417.1px;width:26.4px;height:24.8px;background:radial-gradient(ellipse 70% 70% at 45% 42%,#efebe8 0%,#ddd5cf 50%,#b3a9a2 100%);border-radius:1.5px;box-shadow:inset 1px 1px 0 rgba(255,255,255,.55),inset -1px -1.5px 1.5px rgba(60,40,30,.3)"></div>
<div class="txt" style="left:622.5px;top:445.6px;font-size:8.3px;color:#eef3f4;font-weight:bold;width:200px;text-align:center;text-shadow:0 0 1px rgba(0,0,0,.35)">3.2kHz</div>
<div class="a" style="left:498.0px;top:361px;width:61px;height:16px;background:#161a1c;border-radius:2px;box-shadow:0 1px 0 rgba(255,255,255,.08)"></div>
<div class="txt" style="left:428.5px;top:364.5px;font-size:9px;color:#d2d2d2;width:200px;text-align:center;">-1.12 dB</div>
<div class="txt" style="left:428.5px;top:381.5px;font-size:7.3px;color:#eef3f4;width:200px;text-align:center;">0</div>
<div class="a" style="left:528.0px;top:391px;width:1px;height:4px;background:rgba(220,230,232,.6)"></div>
<svg class="a" style="left:496.5px;top:392px" width="64" height="64"><defs><linearGradient id="eo1" x1="0.3" y1="0" x2="0.6" y2="1"><stop offset="0" stop-color="#c4c4c4"/><stop offset="0.3" stop-color="#9a9a9a"/><stop offset="0.7" stop-color="#4c4c4c"/><stop offset="1" stop-color="#262626"/></linearGradient><radialGradient id="ec1" cx="45%" cy="42%" r="62%"><stop offset="0" stop-color="#e6e4e4"/><stop offset="0.8" stop-color="#d6d2d2"/><stop offset="1" stop-color="#b8b4b4"/></radialGradient><linearGradient id="er1" x1="0" y1="0" x2="0" y2="1"><stop offset="0" stop-color="#d0d0d0"/><stop offset="1" stop-color="#a0a0a0"/></linearGradient></defs><circle cx="32" cy="33.8" r="29" fill="rgba(10,30,35,.35)"/><circle cx="32" cy="32" r="28.4" fill="url(#eo1)"/><path d="M6.44 22.70 A27.2 27.2 0 0 1 55.56 18.40" fill="none" stroke="rgba(255,255,255,.25)" stroke-width="1.2"/><circle cx="32" cy="32" r="20.3" fill="#3a3a3a"/><circle cx="32" cy="32" r="19.4" fill="url(#er1)"/><line x1="33.74" y1="16.50" x2="34.07" y2="13.52" stroke="#333" stroke-width="1.3" stroke-linecap="round"/><line x1="37.15" y1="17.27" x2="38.13" y2="14.44" stroke="#333" stroke-width="1.3" stroke-linecap="round"/><line x1="40.29" y1="18.79" x2="41.89" y2="16.25" stroke="#333" stroke-width="1.3" stroke-linecap="round"/><line x1="43.03" y1="20.96" x2="45.15" y2="18.84" stroke="#333" stroke-width="1.3" stroke-linecap="round"/><line x1="45.20" y1="23.69" x2="47.74" y2="22.10" stroke="#333" stroke-width="1.3" stroke-linecap="round"/><line x1="46.72" y1="26.84" x2="49.55" y2="25.85" stroke="#333" stroke-width="1.3" stroke-linecap="round"/><line x1="47.50" y1="30.25" x2="50.48" y2="29.91" stroke="#333" stroke-width="1.3" stroke-linecap="round"/><line x1="47.50" y1="33.74" x2="50.48" y2="34.07" stroke="#333" stroke-width="1.3" stroke-linecap="round"/><line x1="46.73" y1="37.15" x2="49.56" y2="38.13" stroke="#333" stroke-width="1.3" stroke-linecap="round"/><line x1="45.21" y1="40.29" x2="47.75" y2="41.89" stroke="#333" stroke-width="1.3" stroke-linecap="round"/><line x1="43.04" y1="43.03" x2="45.16" y2="45.15" stroke="#333" stroke-width="1.3" stroke-linecap="round"/><line x1="40.31" y1="45.20" x2="41.90" y2="47.74" stroke="#333" stroke-width="1.3" stroke-linecap="round"/><line x1="37.16" y1="46.72" x2="38.15" y2="49.55" stroke="#333" stroke-width="1.3" stroke-linecap="round"/><line x1="33.75" y1="47.50" x2="34.09" y2="50.48" stroke="#333" stroke-width="1.3" stroke-linecap="round"/><line x1="30.26" y1="47.50" x2="29.93" y2="50.48" stroke="#333" stroke-width="1.3" stroke-linecap="round"/><line x1="26.85" y1="46.73" x2="25.87" y2="49.56" stroke="#333" stroke-width="1.3" stroke-linecap="round"/><line x1="23.71" y1="45.21" x2="22.11" y2="47.75" stroke="#333" stroke-width="1.3" stroke-linecap="round"/><line x1="20.97" y1="43.04" x2="18.85" y2="45.16" stroke="#333" stroke-width="1.3" stroke-linecap="round"/><line x1="18.80" y1="40.31" x2="16.26" y2="41.90" stroke="#333" stroke-width="1.3" stroke-linecap="round"/><line x1="17.28" y1="37.16" x2="14.45" y2="38.15" stroke="#333" stroke-width="1.3" stroke-linecap="round"/><line x1="16.50" y1="33.75" x2="13.52" y2="34.09" stroke="#333" stroke-width="1.3" stroke-linecap="round"/><line x1="16.50" y1="30.26" x2="13.52" y2="29.93" stroke="#333" stroke-width="1.3" stroke-linecap="round"/><line x1="17.27" y1="26.85" x2="14.44" y2="25.87" stroke="#333" stroke-width="1.3" stroke-linecap="round"/><line x1="18.79" y1="23.71" x2="16.25" y2="22.11" stroke="#333" stroke-width="1.3" stroke-linecap="round"/><line x1="20.96" y1="20.97" x2="18.84" y2="18.85" stroke="#333" stroke-width="1.3" stroke-linecap="round"/><line x1="23.69" y1="18.80" x2="22.10" y2="16.26" stroke="#333" stroke-width="1.3" stroke-linecap="round"/><line x1="26.84" y1="17.28" x2="25.85" y2="14.45" stroke="#333" stroke-width="1.3" stroke-linecap="round"/><line x1="30.25" y1="16.50" x2="29.91" y2="13.52" stroke="#333" stroke-width="1.3" stroke-linecap="round"/><circle cx="32" cy="32" r="14.4" fill="#555"/><circle cx="32" cy="32" r="13.6" fill="#ececec"/><circle cx="32" cy="32" r="12.4" fill="url(#ec1)"/><line x1="30.94" y1="16.84" x2="30.63" y2="12.45" stroke="#ffffff" stroke-width="2.4"/></svg>
<div class="txt" style="left:493.5px;top:444.6px;font-size:8.2px;color:#eef3f4;font-weight:bold;letter-spacing:-0.4px">-16</div>
<div class="txt" style="left:549.5px;top:444.6px;font-size:8.2px;color:#eef3f4;font-weight:bold;letter-spacing:-0.4px">+16</div>
<div class="txt" style="left:428.5px;top:461px;font-size:10.8px;color:#eef3f4;font-weight:bold;width:200px;text-align:center;">LF</div>
<svg class="a" style="left:517.0px;top:472.5px" width="28" height="16"><g fill="none" stroke="#eef3f4" stroke-width="1.4" stroke-linecap="round" stroke-linejoin="round"><path d="M3 3.8 L11.5 3.8 L16 8 L11.5 12.2 L3 12.2"/><path d="M16 8 L25.5 8"/></g></svg>
<div class="a" style="left:622.8px;top:361px;width:61px;height:16px;background:#161a1c;border-radius:2px;box-shadow:0 1px 0 rgba(255,255,255,.08)"></div>
<div class="txt" style="left:553.3px;top:364.5px;font-size:9px;color:#d2d2d2;width:200px;text-align:center;">3.04 dB</div>
<div class="txt" style="left:553.3px;top:381.5px;font-size:7.3px;color:#eef3f4;width:200px;text-align:center;">0</div>
<div class="a" style="left:652.8px;top:391px;width:1px;height:4px;background:rgba(220,230,232,.6)"></div>
<svg class="a" style="left:621.3px;top:392px" width="64" height="64"><defs><linearGradient id="eo2" x1="0.3" y1="0" x2="0.6" y2="1"><stop offset="0" stop-color="#c4c4c4"/><stop offset="0.3" stop-color="#9a9a9a"/><stop offset="0.7" stop-color="#4c4c4c"/><stop offset="1" stop-color="#262626"/></linearGradient><radialGradient id="ec2" cx="45%" cy="42%" r="62%"><stop offset="0" stop-color="#e6e4e4"/><stop offset="0.8" stop-color="#d6d2d2"/><stop offset="1" stop-color="#b8b4b4"/></radialGradient><linearGradient id="er2" x1="0" y1="0" x2="0" y2="1"><stop offset="0" stop-color="#d0d0d0"/><stop offset="1" stop-color="#a0a0a0"/></linearGradient></defs><circle cx="32" cy="33.8" r="29" fill="rgba(10,30,35,.35)"/><circle cx="32" cy="32" r="28.4" fill="url(#eo2)"/><path d="M6.44 22.70 A27.2 27.2 0 0 1 55.56 18.40" fill="none" stroke="rgba(255,255,255,.25)" stroke-width="1.2"/><circle cx="32" cy="32" r="20.3" fill="#3a3a3a"/><circle cx="32" cy="32" r="19.4" fill="url(#er2)"/><line x1="33.74" y1="16.50" x2="34.07" y2="13.52" stroke="#333" stroke-width="1.3" stroke-linecap="round"/><line x1="37.15" y1="17.27" x2="38.13" y2="14.44" stroke="#333" stroke-width="1.3" stroke-linecap="round"/><line x1="40.29" y1="18.79" x2="41.89" y2="16.25" stroke="#333" stroke-width="1.3" stroke-linecap="round"/><line x1="43.03" y1="20.96" x2="45.15" y2="18.84" stroke="#333" stroke-width="1.3" stroke-linecap="round"/><line x1="45.20" y1="23.69" x2="47.74" y2="22.10" stroke="#333" stroke-width="1.3" stroke-linecap="round"/><line x1="46.72" y1="26.84" x2="49.55" y2="25.85" stroke="#333" stroke-width="1.3" stroke-linecap="round"/><line x1="47.50" y1="30.25" x2="50.48" y2="29.91" stroke="#333" stroke-width="1.3" stroke-linecap="round"/><line x1="47.50" y1="33.74" x2="50.48" y2="34.07" stroke="#333" stroke-width="1.3" stroke-linecap="round"/><line x1="46.73" y1="37.15" x2="49.56" y2="38.13" stroke="#333" stroke-width="1.3" stroke-linecap="round"/><line x1="45.21" y1="40.29" x2="47.75" y2="41.89" stroke="#333" stroke-width="1.3" stroke-linecap="round"/><line x1="43.04" y1="43.03" x2="45.16" y2="45.15" stroke="#333" stroke-width="1.3" stroke-linecap="round"/><line x1="40.31" y1="45.20" x2="41.90" y2="47.74" stroke="#333" stroke-width="1.3" stroke-linecap="round"/><line x1="37.16" y1="46.72" x2="38.15" y2="49.55" stroke="#333" stroke-width="1.3" stroke-linecap="round"/><line x1="33.75" y1="47.50" x2="34.09" y2="50.48" stroke="#333" stroke-width="1.3" stroke-linecap="round"/><line x1="30.26" y1="47.50" x2="29.93" y2="50.48" stroke="#333" stroke-width="1.3" stroke-linecap="round"/><line x1="26.85" y1="46.73" x2="25.87" y2="49.56" stroke="#333" stroke-width="1.3" stroke-linecap="round"/><line x1="23.71" y1="45.21" x2="22.11" y2="47.75" stroke="#333" stroke-width="1.3" stroke-linecap="round"/><line x1="20.97" y1="43.04" x2="18.85" y2="45.16" stroke="#333" stroke-width="1.3" stroke-linecap="round"/><line x1="18.80" y1="40.31" x2="16.26" y2="41.90" stroke="#333" stroke-width="1.3" stroke-linecap="round"/><line x1="17.28" y1="37.16" x2="14.45" y2="38.15" stroke="#333" stroke-width="1.3" stroke-linecap="round"/><line x1="16.50" y1="33.75" x2="13.52" y2="34.09" stroke="#333" stroke-width="1.3" stroke-linecap="round"/><line x1="16.50" y1="30.26" x2="13.52" y2="29.93" stroke="#333" stroke-width="1.3" stroke-linecap="round"/><line x1="17.27" y1="26.85" x2="14.44" y2="25.87" stroke="#333" stroke-width="1.3" stroke-linecap="round"/><line x1="18.79" y1="23.71" x2="16.25" y2="22.11" stroke="#333" stroke-width="1.3" stroke-linecap="round"/><line x1="20.96" y1="20.97" x2="18.84" y2="18.85" stroke="#333" stroke-width="1.3" stroke-linecap="round"/><line x1="23.69" y1="18.80" x2="22.10" y2="16.26" stroke="#333" stroke-width="1.3" stroke-linecap="round"/><line x1="26.84" y1="17.28" x2="25.85" y2="14.45" stroke="#333" stroke-width="1.3" stroke-linecap="round"/><line x1="30.25" y1="16.50" x2="29.91" y2="13.52" stroke="#333" stroke-width="1.3" stroke-linecap="round"/><circle cx="32" cy="32" r="14.4" fill="#555"/><circle cx="32" cy="32" r="13.6" fill="#ececec"/><circle cx="32" cy="32" r="12.4" fill="url(#ec2)"/><line x1="37.69" y1="17.91" x2="39.34" y2="13.83" stroke="#ffffff" stroke-width="2.4"/></svg>
<div class="txt" style="left:618.3px;top:444.6px;font-size:8.2px;color:#eef3f4;font-weight:bold;letter-spacing:-0.4px">-16</div>
<div class="txt" style="left:674.3px;top:444.6px;font-size:8.2px;color:#eef3f4;font-weight:bold;letter-spacing:-0.4px">+16</div>
<div class="txt" style="left:553.3px;top:461px;font-size:10.8px;color:#eef3f4;font-weight:bold;width:200px;text-align:center;">LMF</div>
<svg class="a" style="left:637.3px;top:472.5px" width="28" height="16"><g fill="none" stroke="#eef3f4" stroke-width="1.4" stroke-linecap="round" stroke-linejoin="round"><circle cx="14" cy="8" r="4.2"/><path d="M4.5 8 L9.8 8 M18.2 8 L27 8"/></g></svg>
<div class="a" style="left:749.0px;top:361px;width:61px;height:16px;background:#161a1c;border-radius:2px;box-shadow:0 1px 0 rgba(255,255,255,.08)"></div>
<div class="txt" style="left:679.5px;top:364.5px;font-size:9px;color:#d2d2d2;width:200px;text-align:center;">-2.08 dB</div>
<div class="txt" style="left:679.5px;top:381.5px;font-size:7.3px;color:#eef3f4;width:200px;text-align:center;">0</div>
<div class="a" style="left:779.0px;top:391px;width:1px;height:4px;background:rgba(220,230,232,.6)"></div>
<svg class="a" style="left:747.5px;top:392px" width="64" height="64"><defs><linearGradient id="eo3" x1="0.3" y1="0" x2="0.6" y2="1"><stop offset="0" stop-color="#c4c4c4"/><stop offset="0.3" stop-color="#9a9a9a"/><stop offset="0.7" stop-color="#4c4c4c"/><stop offset="1" stop-color="#262626"/></linearGradient><radialGradient id="ec3" cx="45%" cy="42%" r="62%"><stop offset="0" stop-color="#e6e4e4"/><stop offset="0.8" stop-color="#d6d2d2"/><stop offset="1" stop-color="#b8b4b4"/></radialGradient><linearGradient id="er3" x1="0" y1="0" x2="0" y2="1"><stop offset="0" stop-color="#d0d0d0"/><stop offset="1" stop-color="#a0a0a0"/></linearGradient></defs><circle cx="32" cy="33.8" r="29" fill="rgba(10,30,35,.35)"/><circle cx="32" cy="32" r="28.4" fill="url(#eo3)"/><path d="M6.44 22.70 A27.2 27.2 0 0 1 55.56 18.40" fill="none" stroke="rgba(255,255,255,.25)" stroke-width="1.2"/><circle cx="32" cy="32" r="20.3" fill="#3a3a3a"/><circle cx="32" cy="32" r="19.4" fill="url(#er3)"/><line x1="33.74" y1="16.50" x2="34.07" y2="13.52" stroke="#333" stroke-width="1.3" stroke-linecap="round"/><line x1="37.15" y1="17.27" x2="38.13" y2="14.44" stroke="#333" stroke-width="1.3" stroke-linecap="round"/><line x1="40.29" y1="18.79" x2="41.89" y2="16.25" stroke="#333" stroke-width="1.3" stroke-linecap="round"/><line x1="43.03" y1="20.96" x2="45.15" y2="18.84" stroke="#333" stroke-width="1.3" stroke-linecap="round"/><line x1="45.20" y1="23.69" x2="47.74" y2="22.10" stroke="#333" stroke-width="1.3" stroke-linecap="round"/><line x1="46.72" y1="26.84" x2="49.55" y2="25.85" stroke="#333" stroke-width="1.3" stroke-linecap="round"/><line x1="47.50" y1="30.25" x2="50.48" y2="29.91" stroke="#333" stroke-width="1.3" stroke-linecap="round"/><line x1="47.50" y1="33.74" x2="50.48" y2="34.07" stroke="#333" stroke-width="1.3" stroke-linecap="round"/><line x1="46.73" y1="37.15" x2="49.56" y2="38.13" stroke="#333" stroke-width="1.3" stroke-linecap="round"/><line x1="45.21" y1="40.29" x2="47.75" y2="41.89" stroke="#333" stroke-width="1.3" stroke-linecap="round"/><line x1="43.04" y1="43.03" x2="45.16" y2="45.15" stroke="#333" stroke-width="1.3" stroke-linecap="round"/><line x1="40.31" y1="45.20" x2="41.90" y2="47.74" stroke="#333" stroke-width="1.3" stroke-linecap="round"/><line x1="37.16" y1="46.72" x2="38.15" y2="49.55" stroke="#333" stroke-width="1.3" stroke-linecap="round"/><line x1="33.75" y1="47.50" x2="34.09" y2="50.48" stroke="#333" stroke-width="1.3" stroke-linecap="round"/><line x1="30.26" y1="47.50" x2="29.93" y2="50.48" stroke="#333" stroke-width="1.3" stroke-linecap="round"/><line x1="26.85" y1="46.73" x2="25.87" y2="49.56" stroke="#333" stroke-width="1.3" stroke-linecap="round"/><line x1="23.71" y1="45.21" x2="22.11" y2="47.75" stroke="#333" stroke-width="1.3" stroke-linecap="round"/><line x1="20.97" y1="43.04" x2="18.85" y2="45.16" stroke="#333" stroke-width="1.3" stroke-linecap="round"/><line x1="18.80" y1="40.31" x2="16.26" y2="41.90" stroke="#333" stroke-width="1.3" stroke-linecap="round"/><line x1="17.28" y1="37.16" x2="14.45" y2="38.15" stroke="#333" stroke-width="1.3" stroke-linecap="round"/><line x1="16.50" y1="33.75" x2="13.52" y2="34.09" stroke="#333" stroke-width="1.3" stroke-linecap="round"/><line x1="16.50" y1="30.26" x2="13.52" y2="29.93" stroke="#333" stroke-width="1.3" stroke-linecap="round"/><line x1="17.27" y1="26.85" x2="14.44" y2="25.87" stroke="#333" stroke-width="1.3" stroke-linecap="round"/><line x1="18.79" y1="23.71" x2="16.25" y2="22.11" stroke="#333" stroke-width="1.3" stroke-linecap="round"/><line x1="20.96" y1="20.97" x2="18.84" y2="18.85" stroke="#333" stroke-width="1.3" stroke-linecap="round"/><line x1="23.69" y1="18.80" x2="22.10" y2="16.26" stroke="#333" stroke-width="1.3" stroke-linecap="round"/><line x1="26.84" y1="17.28" x2="25.85" y2="14.45" stroke="#333" stroke-width="1.3" stroke-linecap="round"/><line x1="30.25" y1="16.50" x2="29.91" y2="13.52" stroke="#333" stroke-width="1.3" stroke-linecap="round"/><circle cx="32" cy="32" r="14.4" fill="#555"/><circle cx="32" cy="32" r="13.6" fill="#ececec"/><circle cx="32" cy="32" r="12.4" fill="url(#ec3)"/><line x1="28.84" y1="17.13" x2="27.92" y2="12.83" stroke="#ffffff" stroke-width="2.4"/></svg>
<div class="txt" style="left:744.5px;top:444.6px;font-size:8.2px;color:#eef3f4;font-weight:bold;letter-spacing:-0.4px">-16</div>
<div class="txt" style="left:800.5px;top:444.6px;font-size:8.2px;color:#eef3f4;font-weight:bold;letter-spacing:-0.4px">+16</div>
<div class="txt" style="left:679.5px;top:461px;font-size:10.8px;color:#eef3f4;font-weight:bold;width:200px;text-align:center;">HMF</div>
<svg class="a" style="left:763.5px;top:472.5px" width="28" height="16"><g fill="none" stroke="#eef3f4" stroke-width="1.4" stroke-linecap="round" stroke-linejoin="round"><circle cx="14" cy="8" r="4.2"/><path d="M4.5 8 L9.8 8 M18.2 8 L27 8"/></g></svg>
<div class="a" style="left:845.5px;top:361px;width:61px;height:16px;background:#161a1c;border-radius:2px;box-shadow:0 1px 0 rgba(255,255,255,.08)"></div>
<div class="txt" style="left:776.0px;top:364.5px;font-size:9px;color:#d2d2d2;width:200px;text-align:center;">1.28 dB</div>
<div class="txt" style="left:776.0px;top:381.5px;font-size:7.3px;color:#eef3f4;width:200px;text-align:center;">0</div>
<div class="a" style="left:875.5px;top:391px;width:1px;height:4px;background:rgba(220,230,232,.6)"></div>
<svg class="a" style="left:844px;top:392px" width="64" height="64"><defs><linearGradient id="eo4" x1="0.3" y1="0" x2="0.6" y2="1"><stop offset="0" stop-color="#c4c4c4"/><stop offset="0.3" stop-color="#9a9a9a"/><stop offset="0.7" stop-color="#4c4c4c"/><stop offset="1" stop-color="#262626"/></linearGradient><radialGradient id="ec4" cx="45%" cy="42%" r="62%"><stop offset="0" stop-color="#e6e4e4"/><stop offset="0.8" stop-color="#d6d2d2"/><stop offset="1" stop-color="#b8b4b4"/></radialGradient><linearGradient id="er4" x1="0" y1="0" x2="0" y2="1"><stop offset="0" stop-color="#d0d0d0"/><stop offset="1" stop-color="#a0a0a0"/></linearGradient></defs><circle cx="32" cy="33.8" r="29" fill="rgba(10,30,35,.35)"/><circle cx="32" cy="32" r="28.4" fill="url(#eo4)"/><path d="M6.44 22.70 A27.2 27.2 0 0 1 55.56 18.40" fill="none" stroke="rgba(255,255,255,.25)" stroke-width="1.2"/><circle cx="32" cy="32" r="20.3" fill="#3a3a3a"/><circle cx="32" cy="32" r="19.4" fill="url(#er4)"/><line x1="33.74" y1="16.50" x2="34.07" y2="13.52" stroke="#333" stroke-width="1.3" stroke-linecap="round"/><line x1="37.15" y1="17.27" x2="38.13" y2="14.44" stroke="#333" stroke-width="1.3" stroke-linecap="round"/><line x1="40.29" y1="18.79" x2="41.89" y2="16.25" stroke="#333" stroke-width="1.3" stroke-linecap="round"/><line x1="43.03" y1="20.96" x2="45.15" y2="18.84" stroke="#333" stroke-width="1.3" stroke-linecap="round"/><line x1="45.20" y1="23.69" x2="47.74" y2="22.10" stroke="#333" stroke-width="1.3" stroke-linecap="round"/><line x1="46.72" y1="26.84" x2="49.55" y2="25.85" stroke="#333" stroke-width="1.3" stroke-linecap="round"/><line x1="47.50" y1="30.25" x2="50.48" y2="29.91" stroke="#333" stroke-width="1.3" stroke-linecap="round"/><line x1="47.50" y1="33.74" x2="50.48" y2="34.07" stroke="#333" stroke-width="1.3" stroke-linecap="round"/><line x1="46.73" y1="37.15" x2="49.56" y2="38.13" stroke="#333" stroke-width="1.3" stroke-linecap="round"/><line x1="45.21" y1="40.29" x2="47.75" y2="41.89" stroke="#333" stroke-width="1.3" stroke-linecap="round"/><line x1="43.04" y1="43.03" x2="45.16" y2="45.15" stroke="#333" stroke-width="1.3" stroke-linecap="round"/><line x1="40.31" y1="45.20" x2="41.90" y2="47.74" stroke="#333" stroke-width="1.3" stroke-linecap="round"/><line x1="37.16" y1="46.72" x2="38.15" y2="49.55" stroke="#333" stroke-width="1.3" stroke-linecap="round"/><line x1="33.75" y1="47.50" x2="34.09" y2="50.48" stroke="#333" stroke-width="1.3" stroke-linecap="round"/><line x1="30.26" y1="47.50" x2="29.93" y2="50.48" stroke="#333" stroke-width="1.3" stroke-linecap="round"/><line x1="26.85" y1="46.73" x2="25.87" y2="49.56" stroke="#333" stroke-width="1.3" stroke-linecap="round"/><line x1="23.71" y1="45.21" x2="22.11" y2="47.75" stroke="#333" stroke-width="1.3" stroke-linecap="round"/><line x1="20.97" y1="43.04" x2="18.85" y2="45.16" stroke="#333" stroke-width="1.3" stroke-linecap="round"/><line x1="18.80" y1="40.31" x2="16.26" y2="41.90" stroke="#333" stroke-width="1.3" stroke-linecap="round"/><line x1="17.28" y1="37.16" x2="14.45" y2="38.15" stroke="#333" stroke-width="1.3" stroke-linecap="round"/><line x1="16.50" y1="33.75" x2="13.52" y2="34.09" stroke="#333" stroke-width="1.3" stroke-linecap="round"/><line x1="16.50" y1="30.26" x2="13.52" y2="29.93" stroke="#333" stroke-width="1.3" stroke-linecap="round"/><line x1="17.27" y1="26.85" x2="14.44" y2="25.87" stroke="#333" stroke-width="1.3" stroke-linecap="round"/><line x1="18.79" y1="23.71" x2="16.25" y2="22.11" stroke="#333" stroke-width="1.3" stroke-linecap="round"/><line x1="20.96" y1="20.97" x2="18.84" y2="18.85" stroke="#333" stroke-width="1.3" stroke-linecap="round"/><line x1="23.69" y1="18.80" x2="22.10" y2="16.26" stroke="#333" stroke-width="1.3" stroke-linecap="round"/><line x1="26.84" y1="17.28" x2="25.85" y2="14.45" stroke="#333" stroke-width="1.3" stroke-linecap="round"/><line x1="30.25" y1="16.50" x2="29.91" y2="13.52" stroke="#333" stroke-width="1.3" stroke-linecap="round"/><circle cx="32" cy="32" r="14.4" fill="#555"/><circle cx="32" cy="32" r="13.6" fill="#ececec"/><circle cx="32" cy="32" r="12.4" fill="url(#ec4)"/><line x1="34.64" y1="17.03" x2="35.40" y2="12.70" stroke="#ffffff" stroke-width="2.4"/></svg>
<div class="txt" style="left:841px;top:444.6px;font-size:8.2px;color:#eef3f4;font-weight:bold;letter-spacing:-0.4px">-16</div>
<div class="txt" style="left:897px;top:444.6px;font-size:8.2px;color:#eef3f4;font-weight:bold;letter-spacing:-0.4px">+16</div>
<div class="txt" style="left:776.0px;top:461px;font-size:10.8px;color:#eef3f4;font-weight:bold;width:200px;text-align:center;">HF</div>
<svg class="a" style="left:860.5px;top:472.5px" width="28" height="16"><g fill="none" stroke="#eef3f4" stroke-width="1.4" stroke-linecap="round" stroke-linejoin="round"><path d="M25 3.8 L16.5 3.8 L12 8 L16.5 12.2 L25 12.2"/><path d="M12 8 L3 8"/></g></svg>
<svg class="a" style="left:816px;top:336px" width="24" height="17"><defs><clipPath id="psc"><rect x="1.5" y="1" width="20" height="14.5" rx="4"/></clipPath></defs><g clip-path="url(#psc)"><rect x="0" y="0" width="24" height="17" fill="#dae4e8"/><path d="M3.5 17 Q5 4 6.8 4 Q8.6 4 8.6 17 M8.2 0 Q9.8 13 11.5 13 Q13.2 13 13.3 0 M12.9 17 Q14.5 4 16.3 4 Q18 4 18.2 17" fill="none" stroke="#5b8c9a" stroke-width="1.3"/></g></svg>
<div class="txt" style="left:839.5px;top:335.5px;font-size:15.5px;color:#dae4e8;font-weight:bold;">Vintage</div>
<svg class="a" style="left:897px;top:337px" width="26" height="15"><g fill="none" stroke="#dae4e8" stroke-width="1.1"><path d="M9.5 1 L2 1 L2 12 L9.5 12 M2 6.5 L8.8 6.5"/><ellipse cx="17.2" cy="6.5" rx="5.6" ry="5.7"/><path d="M18.6 9.5 L23.5 13.8"/></g></svg>
<div class="a" style="left:236px;top:534px;width:831px;height:236.5px;background:repeating-linear-gradient(180deg,rgba(255,255,255,.018) 0,rgba(255,255,255,.018) 1px,rgba(0,0,0,.03) 1px,rgba(0,0,0,.03) 3px),linear-gradient(180deg,#272727 0%,#232323 45%,#1c1c1c 100%)"></div>
<div class="a" style="left:236px;top:770px;width:831px;height:1px;background:#2e2e30"></div>
<div class="a" style="left:1061px;top:534px;width:6px;height:236px;background:linear-gradient(90deg,rgba(255,255,255,0),rgba(255,255,255,.05))"></div>
<svg class="a" style="left:264px;top:567px" width="32" height="56"><defs><radialGradient id="lg1"><stop offset="0" stop-color="#6aaeff" stop-opacity=".35"/><stop offset="1" stop-color="#6aaeff" stop-opacity="0"/></radialGradient><linearGradient id="tg1" x1="0" y1="0" x2="0.3" y2="1"><stop offset="0" stop-color="#e8e8e8"/><stop offset="0.5" stop-color="#9a9a9a"/><stop offset="1" stop-color="#d0d0d0"/></linearGradient></defs><circle cx="16" cy="16.5" r="10" fill="url(#lg1)"/><circle cx="16" cy="16.5" r="5" fill="#0b0f14"/><circle cx="16" cy="16.5" r="3.3" fill="#7fbcff"/><circle cx="15.3" cy="15.6" r="1.4" fill="#dff0ff"/><circle cx="16" cy="40.5" r="11.3" fill="url(#tg1)" stroke="#3a3a3a" stroke-width="0.6"/><circle cx="16" cy="40.5" r="7.5" fill="#6a6a6a"/><circle cx="16" cy="41" r="5.2" fill="#0c0c0c"/><path d="M14.3 41 L14.6 27.5 Q16 25.5 17.4 27.5 L17.7 41 Z" fill="#b8b8b8"/><rect x="15" y="27" width="1.2" height="13" fill="#e8e8e8"/></svg>
<svg class="a" style="left:283.5px;top:606.0px" width="79" height="79"><defs><linearGradient id="fb1" x1="0.2" y1="0.05" x2="0.75" y2="0.95"><stop offset="0" stop-color="#9a9a9a"/><stop offset="0.35" stop-color="#404040"/><stop offset="0.7" stop-color="#141414"/><stop offset="1" stop-color="#0a0a0a"/></linearGradient><radialGradient id="fi1" cx="45%" cy="40%" r="60%"><stop offset="0" stop-color="#262626"/><stop offset="1" stop-color="#0e0e0e"/></radialGradient><radialGradient id="fc1" cx="42%" cy="38%" r="65%"><stop offset="0" stop-color="#ececec"/><stop offset="0.6" stop-color="#bdbdbd"/><stop offset="1" stop-color="#7e7e7e"/></radialGradient></defs><line x1="19.70" y1="59.30" x2="14.75" y2="64.25" stroke="#cfcfcf" stroke-width="1.7"/><line x1="11.50" y1="39.50" x2="4.50" y2="39.50" stroke="#cfcfcf" stroke-width="1.7"/><line x1="19.70" y1="19.70" x2="14.75" y2="14.75" stroke="#cfcfcf" stroke-width="1.7"/><line x1="39.50" y1="11.50" x2="39.50" y2="4.50" stroke="#cfcfcf" stroke-width="1.7"/><line x1="59.30" y1="19.70" x2="64.25" y2="14.75" stroke="#cfcfcf" stroke-width="1.7"/><line x1="67.50" y1="39.50" x2="74.50" y2="39.50" stroke="#cfcfcf" stroke-width="1.7"/><line x1="59.30" y1="59.30" x2="64.25" y2="64.25" stroke="#cfcfcf" stroke-width="1.7"/><circle cx="39.5" cy="41.5" r="27.2" fill="rgba(0,0,0,.55)"/><circle cx="39.5" cy="39.5" r="26.7" fill="url(#fb1)"/><polygon points="39.50,18.94 41.13,18.83 42.82,18.56 44.58,18.32 46.38,18.34 48.08,18.78 49.60,19.68 50.88,20.93 51.96,22.35 52.97,23.73 54.04,24.96 55.27,26.03 56.65,27.04 58.07,28.12 59.32,29.40 60.22,30.92 60.66,32.62 60.68,34.42 60.44,36.18 60.17,37.87 60.06,39.50 60.17,41.13 60.44,42.82 60.68,44.58 60.66,46.38 60.22,48.08 59.32,49.60 58.07,50.88 56.65,51.96 55.27,52.97 54.04,54.04 52.97,55.27 51.96,56.65 50.88,58.07 49.60,59.32 48.08,60.22 46.38,60.66 44.58,60.68 42.82,60.44 41.13,60.17 39.50,60.06 37.87,60.17 36.18,60.44 34.42,60.68 32.62,60.66 30.92,60.22 29.40,59.32 28.12,58.07 27.04,56.65 26.03,55.27 24.96,54.04 23.73,52.97 22.35,51.96 20.93,50.88 19.68,49.60 18.78,48.08 18.34,46.38 18.32,44.58 18.56,42.82 18.83,41.13 18.94,39.50 18.83,37.87 18.56,36.18 18.32,34.42 18.34,32.62 18.78,30.92 19.68,29.40 20.93,28.12 22.35,27.04 23.73,26.03 24.96,24.96 26.03,23.73 27.04,22.35 28.12,20.93 29.40,19.68 30.92,18.78 32.62,18.34 34.42,18.32 36.18,18.56 37.87,18.83" fill="url(#fi1)"/><circle cx="39.5" cy="39.5" r="13.799999999999999" fill="#050505"/><circle cx="39.5" cy="39.5" r="12.2" fill="url(#fc1)"/><circle cx="19.19" cy="32.90" r="2.14" fill="#fafafa"/></svg>
<div class="txt" style="left:194.0px;top:672.5px;font-size:9px;color:#d6d6d6;width:200px;text-align:center;">-56dB</div>
<div class="txt" style="left:250.5px;top:672.5px;font-size:9px;color:#d6d6d6;width:200px;text-align:center;">0dB</div>
<div class="txt" style="left:223.0px;top:685.5px;font-size:10.3px;color:#d6d6d6;width:200px;text-align:center;">Input</div>
<div class="a" style="left:292.5px;top:700px;width:61px;height:14px;background:#181818;box-shadow:0 1px 0 rgba(255,255,255,.08)"></div>
<div class="txt" style="left:223.0px;top:702.5px;font-size:9.6px;color:#d8d8d8;width:200px;text-align:center;">-43.00 dB</div>
<svg class="a" style="left:411.5px;top:606.0px" width="79" height="79"><defs><linearGradient id="fb2" x1="0.2" y1="0.05" x2="0.75" y2="0.95"><stop offset="0" stop-color="#9a9a9a"/><stop offset="0.35" stop-color="#404040"/><stop offset="0.7" stop-color="#141414"/><stop offset="1" stop-color="#0a0a0a"/></linearGradient><radialGradient id="fi2" cx="45%" cy="40%" r="60%"><stop offset="0" stop-color="#262626"/><stop offset="1" stop-color="#0e0e0e"/></radialGradient><radialGradient id="fc2" cx="42%" cy="38%" r="65%"><stop offset="0" stop-color="#ececec"/><stop offset="0.6" stop-color="#bdbdbd"/><stop offset="1" stop-color="#7e7e7e"/></radialGradient></defs><line x1="19.70" y1="59.30" x2="14.75" y2="64.25" stroke="#cfcfcf" stroke-width="1.7"/><line x1="11.50" y1="39.50" x2="4.50" y2="39.50" stroke="#cfcfcf" stroke-width="1.7"/><line x1="19.70" y1="19.70" x2="14.75" y2="14.75" stroke="#cfcfcf" stroke-width="1.7"/><line x1="39.50" y1="11.50" x2="39.50" y2="4.50" stroke="#cfcfcf" stroke-width="1.7"/><line x1="59.30" y1="19.70" x2="64.25" y2="14.75" stroke="#cfcfcf" stroke-width="1.7"/><line x1="67.50" y1="39.50" x2="74.50" y2="39.50" stroke="#cfcfcf" stroke-width="1.7"/><line x1="59.30" y1="59.30" x2="64.25" y2="64.25" stroke="#cfcfcf" stroke-width="1.7"/><circle cx="39.5" cy="41.5" r="27.2" fill="rgba(0,0,0,.55)"/><circle cx="39.5" cy="39.5" r="26.7" fill="url(#fb2)"/><polygon points="39.50,18.94 41.13,18.83 42.82,18.56 44.58,18.32 46.38,18.34 48.08,18.78 49.60,19.68 50.88,20.93 51.96,22.35 52.97,23.73 54.04,24.96 55.27,26.03 56.65,27.04 58.07,28.12 59.32,29.40 60.22,30.92 60.66,32.62 60.68,34.42 60.44,36.18 60.17,37.87 60.06,39.50 60.17,41.13 60.44,42.82 60.68,44.58 60.66,46.38 60.22,48.08 59.32,49.60 58.07,50.88 56.65,51.96 55.27,52.97 54.04,54.04 52.97,55.27 51.96,56.65 50.88,58.07 49.60,59.32 48.08,60.22 46.38,60.66 44.58,60.68 42.82,60.44 41.13,60.17 39.50,60.06 37.87,60.17 36.18,60.44 34.42,60.68 32.62,60.66 30.92,60.22 29.40,59.32 28.12,58.07 27.04,56.65 26.03,55.27 24.96,54.04 23.73,52.97 22.35,51.96 20.93,50.88 19.68,49.60 18.78,48.08 18.34,46.38 18.32,44.58 18.56,42.82 18.83,41.13 18.94,39.50 18.83,37.87 18.56,36.18 18.32,34.42 18.34,32.62 18.78,30.92 19.68,29.40 20.93,28.12 22.35,27.04 23.73,26.03 24.96,24.96 26.03,23.73 27.04,22.35 28.12,20.93 29.40,19.68 30.92,18.78 32.62,18.34 34.42,18.32 36.18,18.56 37.87,18.83" fill="url(#fi2)"/><circle cx="39.5" cy="39.5" r="13.799999999999999" fill="#050505"/><circle cx="39.5" cy="39.5" r="12.2" fill="url(#fc2)"/><circle cx="58.36" cy="49.53" r="2.14" fill="#fafafa"/></svg>
<div class="txt" style="left:322.0px;top:672.5px;font-size:9px;color:#d6d6d6;width:200px;text-align:center;">-56dB</div>
<div class="txt" style="left:378.5px;top:672.5px;font-size:9px;color:#d6d6d6;width:200px;text-align:center;">0dB</div>
<div class="txt" style="left:351.0px;top:685.5px;font-size:10.3px;color:#d6d6d6;width:200px;text-align:center;">Output</div>
<div class="a" style="left:420.5px;top:700px;width:61px;height:14px;background:#181818;box-shadow:0 1px 0 rgba(255,255,255,.08)"></div>
<div class="txt" style="left:351.0px;top:702.5px;font-size:9.6px;color:#d8d8d8;width:200px;text-align:center;">0.00 dB</div>
<svg class="a" style="left:543.5px;top:567.5px" width="67" height="67"><defs><linearGradient id="fb3" x1="0.2" y1="0.05" x2="0.75" y2="0.95"><stop offset="0" stop-color="#9a9a9a"/><stop offset="0.35" stop-color="#404040"/><stop offset="0.7" stop-color="#141414"/><stop offset="1" stop-color="#0a0a0a"/></linearGradient><radialGradient id="fi3" cx="45%" cy="40%" r="60%"><stop offset="0" stop-color="#262626"/><stop offset="1" stop-color="#0e0e0e"/></radialGradient><radialGradient id="fc3" cx="42%" cy="38%" r="65%"><stop offset="0" stop-color="#ececec"/><stop offset="0.6" stop-color="#bdbdbd"/><stop offset="1" stop-color="#7e7e7e"/></radialGradient></defs><line x1="18.30" y1="48.70" x2="15.12" y2="51.88" stroke="#cfcfcf" stroke-width="1.7"/><line x1="12.00" y1="33.50" x2="7.50" y2="33.50" stroke="#cfcfcf" stroke-width="1.7"/><line x1="18.30" y1="18.30" x2="15.12" y2="15.12" stroke="#cfcfcf" stroke-width="1.7"/><line x1="33.50" y1="12.00" x2="33.50" y2="7.50" stroke="#cfcfcf" stroke-width="1.7"/><line x1="48.70" y1="18.30" x2="51.88" y2="15.12" stroke="#cfcfcf" stroke-width="1.7"/><line x1="55.00" y1="33.50" x2="59.50" y2="33.50" stroke="#cfcfcf" stroke-width="1.7"/><line x1="48.70" y1="48.70" x2="51.88" y2="51.88" stroke="#cfcfcf" stroke-width="1.7"/><circle cx="33.5" cy="35.5" r="21.3" fill="rgba(0,0,0,.55)"/><circle cx="33.5" cy="33.5" r="20.8" fill="url(#fb3)"/><polygon points="33.50,17.48 34.77,17.39 36.08,17.18 37.46,17.00 38.86,17.02 40.19,17.36 41.37,18.06 42.37,19.03 43.21,20.14 43.99,21.22 44.83,22.17 45.78,23.01 46.86,23.79 47.97,24.63 48.94,25.63 49.64,26.81 49.98,28.14 50.00,29.54 49.82,30.92 49.61,32.23 49.52,33.50 49.61,34.77 49.82,36.08 50.00,37.46 49.98,38.86 49.64,40.19 48.94,41.37 47.97,42.37 46.86,43.21 45.78,43.99 44.83,44.83 43.99,45.78 43.21,46.86 42.37,47.97 41.37,48.94 40.19,49.64 38.86,49.98 37.46,50.00 36.08,49.82 34.77,49.61 33.50,49.52 32.23,49.61 30.92,49.82 29.54,50.00 28.14,49.98 26.81,49.64 25.63,48.94 24.63,47.97 23.79,46.86 23.01,45.78 22.17,44.83 21.22,43.99 20.14,43.21 19.03,42.37 18.06,41.37 17.36,40.19 17.02,38.86 17.00,37.46 17.18,36.08 17.39,34.77 17.48,33.50 17.39,32.23 17.18,30.92 17.00,29.54 17.02,28.14 17.36,26.81 18.06,25.63 19.03,24.63 20.14,23.79 21.22,23.01 22.17,22.17 23.01,21.22 23.79,20.14 24.63,19.03 25.63,18.06 26.81,17.36 28.14,17.02 29.54,17.00 30.92,17.18 32.23,17.39" fill="url(#fi3)"/><circle cx="33.5" cy="33.5" r="10.799999999999999" fill="#050505"/><circle cx="33.5" cy="33.5" r="9.2" fill="url(#fc3)"/><circle cx="49.98" cy="35.82" r="1.70" fill="#fafafa"/></svg>
<div class="txt" style="left:454.0px;top:621.5px;font-size:9px;color:#d6d6d6;width:200px;text-align:center;">.8ms</div>
<div class="txt" style="left:501.0px;top:621.5px;font-size:9px;color:#d6d6d6;width:200px;text-align:center;">.02ms</div>
<div class="txt" style="left:477.0px;top:632.5px;font-size:9.8px;color:#d6d6d6;width:200px;text-align:center;">Attack</div>
<svg class="a" style="left:543.5px;top:651.5px" width="67" height="67"><defs><linearGradient id="fb4" x1="0.2" y1="0.05" x2="0.75" y2="0.95"><stop offset="0" stop-color="#9a9a9a"/><stop offset="0.35" stop-color="#404040"/><stop offset="0.7" stop-color="#141414"/><stop offset="1" stop-color="#0a0a0a"/></linearGradient><radialGradient id="fi4" cx="45%" cy="40%" r="60%"><stop offset="0" stop-color="#262626"/><stop offset="1" stop-color="#0e0e0e"/></radialGradient><radialGradient id="fc4" cx="42%" cy="38%" r="65%"><stop offset="0" stop-color="#ececec"/><stop offset="0.6" stop-color="#bdbdbd"/><stop offset="1" stop-color="#7e7e7e"/></radialGradient></defs><line x1="18.30" y1="48.70" x2="15.12" y2="51.88" stroke="#cfcfcf" stroke-width="1.7"/><line x1="12.00" y1="33.50" x2="7.50" y2="33.50" stroke="#cfcfcf" stroke-width="1.7"/><line x1="18.30" y1="18.30" x2="15.12" y2="15.12" stroke="#cfcfcf" stroke-width="1.7"/><line x1="33.50" y1="12.00" x2="33.50" y2="7.50" stroke="#cfcfcf" stroke-width="1.7"/><line x1="48.70" y1="18.30" x2="51.88" y2="15.12" stroke="#cfcfcf" stroke-width="1.7"/><line x1="55.00" y1="33.50" x2="59.50" y2="33.50" stroke="#cfcfcf" stroke-width="1.7"/><line x1="48.70" y1="48.70" x2="51.88" y2="51.88" stroke="#cfcfcf" stroke-width="1.7"/><circle cx="33.5" cy="35.5" r="21.3" fill="rgba(0,0,0,.55)"/><circle cx="33.5" cy="33.5" r="20.8" fill="url(#fb4)"/><polygon points="33.50,17.48 34.77,17.39 36.08,17.18 37.46,17.00 38.86,17.02 40.19,17.36 41.37,18.06 42.37,19.03 43.21,20.14 43.99,21.22 44.83,22.17 45.78,23.01 46.86,23.79 47.97,24.63 48.94,25.63 49.64,26.81 49.98,28.14 50.00,29.54 49.82,30.92 49.61,32.23 49.52,33.50 49.61,34.77 49.82,36.08 50.00,37.46 49.98,38.86 49.64,40.19 48.94,41.37 47.97,42.37 46.86,43.21 45.78,43.99 44.83,44.83 43.99,45.78 43.21,46.86 42.37,47.97 41.37,48.94 40.19,49.64 38.86,49.98 37.46,50.00 36.08,49.82 34.77,49.61 33.50,49.52 32.23,49.61 30.92,49.82 29.54,50.00 28.14,49.98 26.81,49.64 25.63,48.94 24.63,47.97 23.79,46.86 23.01,45.78 22.17,44.83 21.22,43.99 20.14,43.21 19.03,42.37 18.06,41.37 17.36,40.19 17.02,38.86 17.00,37.46 17.18,36.08 17.39,34.77 17.48,33.50 17.39,32.23 17.18,30.92 17.00,29.54 17.02,28.14 17.36,26.81 18.06,25.63 19.03,24.63 20.14,23.79 21.22,23.01 22.17,22.17 23.01,21.22 23.79,20.14 24.63,19.03 25.63,18.06 26.81,17.36 28.14,17.02 29.54,17.00 30.92,17.18 32.23,17.39" fill="url(#fi4)"/><circle cx="33.5" cy="33.5" r="10.799999999999999" fill="#050505"/><circle cx="33.5" cy="33.5" r="9.2" fill="url(#fc4)"/><circle cx="49.78" cy="30.04" r="1.70" fill="#fafafa"/></svg>
<div class="txt" style="left:454.0px;top:705.5px;font-size:9px;color:#d6d6d6;width:200px;text-align:center;">1.1sec</div>
<div class="txt" style="left:501.0px;top:705.5px;font-size:9px;color:#d6d6d6;width:200px;text-align:center;">50ms</div>
<div class="txt" style="left:477.0px;top:716.5px;font-size:9.8px;color:#d6d6d6;width:200px;text-align:center;">Release</div>
<div class="a" style="left:661px;top:575.0px;width:30px;height:29px;background:#0e0e0e;border-radius:2px"></div>
<div class="a" style="left:662px;top:576.0px;width:28px;height:27px;background:linear-gradient(160deg,#ece6e2 0%,#d8d0cb 50%,#bfb6b0 100%);border-radius:1.5px;box-shadow:inset 0 -2px 2px rgba(60,40,30,.35),inset 1px 1px 0 rgba(255,255,255,.5)"></div>
<div class="txt" style="left:576.0px;top:584.0px;font-size:10.2px;color:#3e3e3e;width:200px;text-align:center;">4:1</div>
<div class="a" style="left:661px;top:606.2px;width:30px;height:29px;background:#0e0e0e;border-radius:2px"></div>
<div class="a" style="left:662px;top:607.2px;width:28px;height:27px;background:linear-gradient(160deg,#fbf9e2 0%,#f2efcc 50%,#e0dcb4 100%);border-radius:1.5px;box-shadow:inset 0 -2px 2px rgba(60,40,30,.35),inset 1px 1px 0 rgba(255,255,255,.5)"></div>
<div class="txt" style="left:576.0px;top:615.2px;font-size:10.2px;color:#3e3e3e;width:200px;text-align:center;">8:1</div>
<div class="a" style="left:661px;top:637.4px;width:30px;height:29px;background:#0e0e0e;border-radius:2px"></div>
<div class="a" style="left:662px;top:638.4px;width:28px;height:27px;background:linear-gradient(160deg,#ece6e2 0%,#d8d0cb 50%,#bfb6b0 100%);border-radius:1.5px;box-shadow:inset 0 -2px 2px rgba(60,40,30,.35),inset 1px 1px 0 rgba(255,255,255,.5)"></div>
<div class="txt" style="left:576.0px;top:646.4px;font-size:10.2px;color:#3e3e3e;width:200px;text-align:center;">12:1</div>
<div class="a" style="left:661px;top:668.6px;width:30px;height:29px;background:#0e0e0e;border-radius:2px"></div>
<div class="a" style="left:662px;top:669.6px;width:28px;height:27px;background:linear-gradient(160deg,#ece6e2 0%,#d8d0cb 50%,#bfb6b0 100%);border-radius:1.5px;box-shadow:inset 0 -2px 2px rgba(60,40,30,.35),inset 1px 1px 0 rgba(255,255,255,.5)"></div>
<div class="txt" style="left:576.0px;top:677.6px;font-size:10.2px;color:#3e3e3e;width:200px;text-align:center;">20:1</div>
<div class="a" style="left:661px;top:699.8px;width:30px;height:29px;background:#0e0e0e;border-radius:2px"></div>
<div class="a" style="left:662px;top:700.8px;width:28px;height:27px;background:linear-gradient(160deg,#ece6e2 0%,#d8d0cb 50%,#bfb6b0 100%);border-radius:1.5px;box-shadow:inset 0 -2px 2px rgba(60,40,30,.35),inset 1px 1px 0 rgba(255,255,255,.5)"></div>
<div class="txt" style="left:576.0px;top:708.8px;font-size:10.2px;color:#3e3e3e;width:200px;text-align:center;">All</div>
<svg class="a" style="left:780px;top:614px" width="122" height="65"><defs><linearGradient id="vuf" x1="0" y1="0" x2="0" y2="1"><stop offset="0" stop-color="#f69a26"/><stop offset="0.25" stop-color="#fab650"/><stop offset="0.55" stop-color="#fddc80"/><stop offset="1" stop-color="#fff4b8"/></linearGradient><radialGradient id="vuo" cx="0.7" cy="0.05" r="0.55"><stop offset="0" stop-color="#f08010" stop-opacity=".55"/><stop offset="1" stop-color="#f28a18" stop-opacity="0"/></radialGradient><linearGradient id="vul" x1="0" y1="0" x2="1" y2="0"><stop offset="0" stop-color="#fff6d0" stop-opacity=".55"/><stop offset="0.12" stop-color="#fff" stop-opacity="0"/><stop offset="0.88" stop-color="#fff" stop-opacity="0"/><stop offset="1" stop-color="#fff6d0" stop-opacity=".45"/></linearGradient></defs><rect x="1" y="1" width="120" height="63" rx="4" fill="#0c0c0c"/><rect x="3.5" y="3.3" width="115.5" height="57.2" rx="2.5" fill="url(#vuf)"/><rect x="3.5" y="3.3" width="115.5" height="57.2" rx="2.5" fill="url(#vuo)"/><rect x="3.5" y="3.3" width="115.5" height="57.2" rx="2.5" fill="url(#vul)"/><rect x="5" y="4.8" width="112.5" height="54.2" rx="2" fill="none" stroke="#fff4cc" stroke-opacity=".45" stroke-width="2"/><path d="M23 33 Q45 25 68 25.8" fill="none" stroke="#1a1a1a" stroke-width="1.5"/><path d="M68 25.8 Q84 26.5 96 32" fill="none" stroke="#e02a1a" stroke-width="1.5"/><line x1="28" y1="31.2" x2="27.7" y2="28.2" stroke="#1a1a1a" stroke-width="0.7"/><line x1="34" y1="29.2" x2="33.7" y2="26.2" stroke="#1a1a1a" stroke-width="0.7"/><line x1="40" y1="27.8" x2="39.7" y2="24.8" stroke="#1a1a1a" stroke-width="0.7"/><line x1="47" y1="26.6" x2="46.7" y2="23.6" stroke="#1a1a1a" stroke-width="0.7"/><line x1="54" y1="25.9" x2="53.7" y2="22.9" stroke="#1a1a1a" stroke-width="0.7"/><line x1="61" y1="25.6" x2="60.7" y2="22.6" stroke="#1a1a1a" stroke-width="0.7"/><line x1="67" y1="25.7" x2="66.7" y2="22.7" stroke="#1a1a1a" stroke-width="0.7"/><line x1="76" y1="26" x2="76.6" y2="23" stroke="#e02a1a" stroke-width="0.7"/><line x1="84" y1="27.4" x2="84.6" y2="24.4" stroke="#e02a1a" stroke-width="0.7"/><line x1="92" y1="30" x2="92.6" y2="27" stroke="#e02a1a" stroke-width="0.7"/><g font-family="Liberation Sans" font-size="4" fill="#333"><text x="26" y="23">20</text><text x="33" y="21">10</text><text x="41" y="20.3">7</text><text x="50" y="19.6">5</text><text x="58" y="19.3">3</text><text x="65" y="19.3">1</text><text x="19" y="28">-</text><text x="28" y="36.5">%</text><text x="33" y="36">0</text><text x="38" y="34.5">20</text><text x="45" y="33.5">50</text><text x="55" y="32.5">70</text><text x="62" y="32.3">100</text></g><g font-family="Liberation Sans" font-size="4" fill="#e02a1a"><text x="68.5" y="19.3">0</text><text x="78" y="20.5">3</text><text x="88" y="22.5">5</text><text x="94" y="27">+</text></g><circle cx="82" cy="31" r="1.1" fill="#e02a1a"/><text x="53" y="45" font-family="Liberation Sans" font-size="6.5" fill="#2a2a2a">VU</text><line x1="63.2" y1="57" x2="71.7" y2="21" stroke="#e8201a" stroke-width="1.3"/></svg>
<svg class="a" style="left:787px;top:685px" width="24" height="17"><defs><clipPath id="psc2"><rect x="1.5" y="1" width="20" height="14.5" rx="4"/></clipPath></defs><g clip-path="url(#psc2)"><rect x="0" y="0" width="24" height="17" fill="#7a7a7a"/><path d="M3.5 17 Q5 4 6.8 4 Q8.6 4 8.6 17 M8.2 0 Q9.8 13 11.5 13 Q13.2 13 13.3 0 M12.9 17 Q14.5 4 16.3 4 Q18 4 18.2 17" fill="none" stroke="#232323" stroke-width="1.3"/></g></svg>
<div class="txt" style="left:812.5px;top:684.5px;font-size:15.5px;color:#7c7c7c;font-weight:bold;">FET</div>
<svg class="a" style="left:844px;top:686px" width="50" height="14"><g fill="none" stroke="#7c7c7c" stroke-width="1.05"><path d="M9.3 2.8 A5.2 5.6 0 1 0 9.3 10.2"/><ellipse cx="17.8" cy="6.5" rx="5.4" ry="5.7"/><path d="M25.5 12.5 L25.5 0.8 L30.5 10.5 L35.5 0.8 L35.5 12.5"/><path d="M39 12.5 L39 0.8 L44 0.8 Q47.5 0.8 47.5 4 Q47.5 7.2 44 7.2 L39 7.2"/></g></svg>
<div class="txt" style="left:885.0px;top:579px;font-size:9.3px;color:#d6d6d6;width:200px;text-align:center;">Key Source</div>
<div class="a" style="left:954px;top:591.5px;width:62px;height:14px;background:#141414"></div>
<div class="txt" style="left:965.5px;top:594.5px;font-size:10.2px;color:#dedede;">None</div>
<svg class="a" style="left:1000px;top:596px" width="10" height="8"><path d="M0.5 0.5 L9 0.5 L4.75 6.5 Z" fill="#e8e8e8"/></svg>
<div class="a" style="left:953px;top:612.3px;width:64px;height:22px;background:#0e0e0e;border-radius:2px"></div>
<div class="a" style="left:954px;top:613.3px;width:62px;height:19.6px;background:linear-gradient(180deg,#f2ece8 0%,#e2dad4 60%,#c8beb6 100%);border-radius:1.5px;box-shadow:inset 0 -2px 2px rgba(60,40,30,.3)"></div>
<div class="txt" style="left:885.0px;top:618.2px;font-size:9.8px;color:#444;width:200px;text-align:center;">Key Listen</div>
<svg class="a" style="left:950.7px;top:632.5px" width="67" height="67"><defs><linearGradient id="fb5" x1="0.2" y1="0.05" x2="0.75" y2="0.95"><stop offset="0" stop-color="#9a9a9a"/><stop offset="0.35" stop-color="#404040"/><stop offset="0.7" stop-color="#141414"/><stop offset="1" stop-color="#0a0a0a"/></linearGradient><radialGradient id="fi5" cx="45%" cy="40%" r="60%"><stop offset="0" stop-color="#262626"/><stop offset="1" stop-color="#0e0e0e"/></radialGradient><radialGradient id="fc5" cx="42%" cy="38%" r="65%"><stop offset="0" stop-color="#ececec"/><stop offset="0.6" stop-color="#bdbdbd"/><stop offset="1" stop-color="#7e7e7e"/></radialGradient></defs><line x1="18.30" y1="48.70" x2="14.76" y2="52.24" stroke="#cfcfcf" stroke-width="1.7"/><line x1="12.00" y1="33.50" x2="7.00" y2="33.50" stroke="#cfcfcf" stroke-width="1.7"/><line x1="18.30" y1="18.30" x2="14.76" y2="14.76" stroke="#cfcfcf" stroke-width="1.7"/><line x1="33.50" y1="12.00" x2="33.50" y2="7.00" stroke="#cfcfcf" stroke-width="1.7"/><line x1="48.70" y1="18.30" x2="52.24" y2="14.76" stroke="#cfcfcf" stroke-width="1.7"/><line x1="55.00" y1="33.50" x2="60.00" y2="33.50" stroke="#cfcfcf" stroke-width="1.7"/><line x1="48.70" y1="48.70" x2="52.24" y2="52.24" stroke="#cfcfcf" stroke-width="1.7"/><circle cx="33.5" cy="35.5" r="21.1" fill="rgba(0,0,0,.55)"/><circle cx="33.5" cy="33.5" r="20.6" fill="url(#fb5)"/><polygon points="33.50,17.64 34.76,17.55 36.06,17.34 37.42,17.16 38.80,17.17 40.12,17.51 41.29,18.20 42.28,19.17 43.12,20.26 43.89,21.33 44.72,22.28 45.67,23.11 46.74,23.88 47.83,24.72 48.80,25.71 49.49,26.88 49.83,28.20 49.84,29.58 49.66,30.94 49.45,32.24 49.36,33.50 49.45,34.76 49.66,36.06 49.84,37.42 49.83,38.80 49.49,40.12 48.80,41.29 47.83,42.28 46.74,43.12 45.67,43.89 44.72,44.72 43.89,45.67 43.12,46.74 42.28,47.83 41.29,48.80 40.12,49.49 38.80,49.83 37.42,49.84 36.06,49.66 34.76,49.45 33.50,49.36 32.24,49.45 30.94,49.66 29.58,49.84 28.20,49.83 26.88,49.49 25.71,48.80 24.72,47.83 23.88,46.74 23.11,45.67 22.28,44.72 21.33,43.89 20.26,43.12 19.17,42.28 18.20,41.29 17.51,40.12 17.17,38.80 17.16,37.42 17.34,36.06 17.55,34.76 17.64,33.50 17.55,32.24 17.34,30.94 17.16,29.58 17.17,28.20 17.51,26.88 18.20,25.71 19.17,24.72 20.26,23.88 21.33,23.11 22.28,22.28 23.11,21.33 23.88,20.26 24.72,19.17 25.71,18.20 26.88,17.51 28.20,17.17 29.58,17.16 30.94,17.34 32.24,17.55" fill="url(#fi5)"/><circle cx="33.5" cy="33.5" r="10.6" fill="#050505"/><circle cx="33.5" cy="33.5" r="9" fill="url(#fc5)"/><circle cx="20.88" cy="44.09" r="1.70" fill="#fafafa"/></svg>
<div class="txt" style="left:956px;top:687.5px;font-size:9px;color:#d6d6d6;">off</div>
<div class="txt" style="left:996px;top:687.5px;font-size:9px;color:#d6d6d6;">16kHz</div>
<div class="txt" style="left:884.5px;top:700px;font-size:9.6px;color:#d6d6d6;width:200px;text-align:center;">Key Filter</div>
<div class="a" style="left:954px;top:715.3px;width:62px;height:12.5px;background:#161616;box-shadow:0 1px 0 rgba(255,255,255,.07)"></div>
<div class="txt" style="left:884.5px;top:717px;font-size:9.6px;color:#dedede;width:200px;text-align:center;">off</div>
<div class="txt" style="left:-87.0px;top:775.2px;font-size:7.4px;color:#9c9c9c;width:200px;text-align:center;">1</div>
<div class="a" style="left:10.2px;top:784px;width:5.7px;height:14px;background:repeating-linear-gradient(180deg,#3a3a3a 0,#3a3a3a 1px,#1c1c1c 1px,#1c1c1c 2px)"></div>
<div class="a" style="left:10.2px;top:785.9px;width:5.7px;height:1.6px;background:#d9a55e"></div>
<div class="a" style="left:10.2px;top:787.5px;width:5.7px;height:10.5px;background:repeating-linear-gradient(180deg,#58bc4c 0,#58bc4c 1px,#3c9636 1px,#3c9636 2px)"></div>
<div class="txt" style="left:-59.5px;top:775.2px;font-size:7.4px;color:#9c9c9c;width:200px;text-align:center;">2</div>
<div class="a" style="left:37.7px;top:784px;width:5.7px;height:14px;background:repeating-linear-gradient(180deg,#3a3a3a 0,#3a3a3a 1px,#1c1c1c 1px,#1c1c1c 2px)"></div>
<div class="a" style="left:37.7px;top:790px;width:5.7px;height:8px;background:repeating-linear-gradient(180deg,#58bc4c 0,#58bc4c 1px,#3c9636 1px,#3c9636 2px)"></div>
<div class="txt" style="left:-32.25px;top:775.2px;font-size:7.4px;color:#9c9c9c;width:200px;text-align:center;">3</div>
<div class="a" style="left:64.95px;top:784px;width:5.7px;height:14px;background:repeating-linear-gradient(180deg,#3a3a3a 0,#3a3a3a 1px,#1c1c1c 1px,#1c1c1c 2px)"></div>
<div class="a" style="left:64.95px;top:785.6999999999999px;width:5.7px;height:1.6px;background:#d9a55e"></div>
<div class="a" style="left:64.95px;top:787.3px;width:5.7px;height:10.700000000000045px;background:repeating-linear-gradient(180deg,#58bc4c 0,#58bc4c 1px,#3c9636 1px,#3c9636 2px)"></div>
<div class="txt" style="left:-4.75px;top:775.2px;font-size:7.4px;color:#9c9c9c;width:200px;text-align:center;">4</div>
<div class="a" style="left:92.45px;top:784px;width:5.7px;height:14px;background:repeating-linear-gradient(180deg,#3a3a3a 0,#3a3a3a 1px,#1c1c1c 1px,#1c1c1c 2px)"></div>
<div class="a" style="left:92.45px;top:785.6999999999999px;width:5.7px;height:1.6px;background:#d9a55e"></div>
<div class="a" style="left:92.45px;top:787.3px;width:5.7px;height:10.700000000000045px;background:repeating-linear-gradient(180deg,#58bc4c 0,#58bc4c 1px,#3c9636 1px,#3c9636 2px)"></div>
<div class="txt" style="left:22.5px;top:775.2px;font-size:7.4px;color:#9c9c9c;width:200px;text-align:center;">5</div>
<div class="a" style="left:119.7px;top:784px;width:5.7px;height:14px;background:repeating-linear-gradient(180deg,#3a3a3a 0,#3a3a3a 1px,#1c1c1c 1px,#1c1c1c 2px)"></div>
<div class="a" style="left:119.7px;top:785.6999999999999px;width:5.7px;height:1.6px;background:#d9a55e"></div>
<div class="a" style="left:119.7px;top:787.3px;width:5.7px;height:10.700000000000045px;background:repeating-linear-gradient(180deg,#58bc4c 0,#58bc4c 1px,#3c9636 1px,#3c9636 2px)"></div>
<div class="txt" style="left:50.0px;top:775.2px;font-size:7.4px;color:#9c9c9c;width:200px;text-align:center;">6</div>
<div class="a" style="left:147.2px;top:784px;width:5.7px;height:14px;background:repeating-linear-gradient(180deg,#3a3a3a 0,#3a3a3a 1px,#1c1c1c 1px,#1c1c1c 2px)"></div>
<div class="a" style="left:147.2px;top:785.9px;width:5.7px;height:1.6px;background:#d9a55e"></div>
<div class="a" style="left:147.2px;top:787.5px;width:5.7px;height:10.5px;background:repeating-linear-gradient(180deg,#58bc4c 0,#58bc4c 1px,#3c9636 1px,#3c9636 2px)"></div>
<div class="txt" style="left:77.25px;top:775.2px;font-size:7.4px;color:#9c9c9c;width:200px;text-align:center;">7</div>
<div class="a" style="left:174.45px;top:784px;width:5.7px;height:14px;background:repeating-linear-gradient(180deg,#3a3a3a 0,#3a3a3a 1px,#1c1c1c 1px,#1c1c1c 2px)"></div>
<div class="a" style="left:174.45px;top:788px;width:5.7px;height:10px;background:repeating-linear-gradient(180deg,#58bc4c 0,#58bc4c 1px,#3c9636 1px,#3c9636 2px)"></div>
<div class="txt" style="left:104.25px;top:775.2px;font-size:7.4px;color:#9c9c9c;width:200px;text-align:center;">8</div>
<div class="a" style="left:201.45px;top:784px;width:5.7px;height:14px;background:repeating-linear-gradient(180deg,#3a3a3a 0,#3a3a3a 1px,#1c1c1c 1px,#1c1c1c 2px)"></div>
<div class="a" style="left:201.45px;top:788px;width:5.7px;height:10px;background:repeating-linear-gradient(180deg,#58bc4c 0,#58bc4c 1px,#3c9636 1px,#3c9636 2px)"></div>
<div class="txt" style="left:130.5px;top:775.2px;font-size:7.4px;color:#9c9c9c;width:200px;text-align:center;">9</div>
<div class="a" style="left:227.7px;top:784px;width:5.7px;height:14px;background:repeating-linear-gradient(180deg,#3a3a3a 0,#3a3a3a 1px,#1c1c1c 1px,#1c1c1c 2px)"></div>
<div class="a" style="left:227.7px;top:785.6999999999999px;width:5.7px;height:1.6px;background:#d9a55e"></div>
<div class="a" style="left:227.7px;top:787.3px;width:5.7px;height:10.700000000000045px;background:repeating-linear-gradient(180deg,#58bc4c 0,#58bc4c 1px,#3c9636 1px,#3c9636 2px)"></div>
<div class="txt" style="left:157.5px;top:775.2px;font-size:7.4px;color:#9c9c9c;width:200px;text-align:center;">10</div>
<div class="a" style="left:254.7px;top:784px;width:5.7px;height:14px;background:repeating-linear-gradient(180deg,#3a3a3a 0,#3a3a3a 1px,#1c1c1c 1px,#1c1c1c 2px)"></div>
<div class="a" style="left:254.7px;top:785.9px;width:5.7px;height:1.6px;background:#d9a55e"></div>
<div class="a" style="left:254.7px;top:787.5px;width:5.7px;height:10.5px;background:repeating-linear-gradient(180deg,#58bc4c 0,#58bc4c 1px,#3c9636 1px,#3c9636 2px)"></div>
<div class="txt" style="left:183.75px;top:775.2px;font-size:7.4px;color:#9c9c9c;width:200px;text-align:center;">11</div>
<div class="a" style="left:280.95px;top:784px;width:5.7px;height:14px;background:repeating-linear-gradient(180deg,#3a3a3a 0,#3a3a3a 1px,#1c1c1c 1px,#1c1c1c 2px)"></div>
<div class="a" style="left:280.95px;top:785.4px;width:5.7px;height:1.6px;background:#d9a55e"></div>
<div class="a" style="left:280.95px;top:787px;width:5.7px;height:11px;background:repeating-linear-gradient(180deg,#58bc4c 0,#58bc4c 1px,#3c9636 1px,#3c9636 2px)"></div>
<div class="txt" style="left:210.25px;top:775.2px;font-size:7.4px;color:#9c9c9c;width:200px;text-align:center;">12</div>
<div class="a" style="left:307.45px;top:784px;width:5.7px;height:14px;background:repeating-linear-gradient(180deg,#3a3a3a 0,#3a3a3a 1px,#1c1c1c 1px,#1c1c1c 2px)"></div>
<div class="a" style="left:307.45px;top:785.4px;width:5.7px;height:1.6px;background:#d9a55e"></div>
<div class="a" style="left:307.45px;top:787px;width:5.7px;height:11px;background:repeating-linear-gradient(180deg,#58bc4c 0,#58bc4c 1px,#3c9636 1px,#3c9636 2px)"></div>
<div class="txt" style="left:237.0px;top:775.2px;font-size:7.4px;color:#9c9c9c;width:200px;text-align:center;">13</div>
<div class="a" style="left:334.2px;top:784px;width:5.7px;height:14px;background:repeating-linear-gradient(180deg,#3a3a3a 0,#3a3a3a 1px,#1c1c1c 1px,#1c1c1c 2px)"></div>
<div class="a" style="left:334.2px;top:785.6999999999999px;width:5.7px;height:1.6px;background:#d9a55e"></div>
<div class="a" style="left:334.2px;top:787.3px;width:5.7px;height:10.700000000000045px;background:repeating-linear-gradient(180deg,#58bc4c 0,#58bc4c 1px,#3c9636 1px,#3c9636 2px)"></div>
<div class="txt" style="left:263.5px;top:775.2px;font-size:7.4px;color:#9c9c9c;width:200px;text-align:center;">14</div>
<div class="a" style="left:360.7px;top:784px;width:5.7px;height:14px;background:repeating-linear-gradient(180deg,#3a3a3a 0,#3a3a3a 1px,#1c1c1c 1px,#1c1c1c 2px)"></div>
<div class="a" style="left:360.7px;top:795px;width:5.7px;height:3px;background:repeating-linear-gradient(180deg,#58bc4c 0,#58bc4c 1px,#3c9636 1px,#3c9636 2px)"></div>
<div class="txt" style="left:290.0px;top:775.2px;font-size:7.4px;color:#9c9c9c;width:200px;text-align:center;">15</div>
<div class="a" style="left:387.2px;top:784px;width:5.7px;height:14px;background:repeating-linear-gradient(180deg,#3a3a3a 0,#3a3a3a 1px,#1c1c1c 1px,#1c1c1c 2px)"></div>
<div class="txt" style="left:316.5px;top:775.2px;font-size:7.4px;color:#9c9c9c;width:200px;text-align:center;">16</div>
<div class="a" style="left:413.7px;top:784px;width:5.7px;height:14px;background:repeating-linear-gradient(180deg,#3a3a3a 0,#3a3a3a 1px,#1c1c1c 1px,#1c1c1c 2px)"></div>
<div class="txt" style="left:343.25px;top:775.2px;font-size:7.4px;color:#9c9c9c;width:200px;text-align:center;">17</div>
<div class="a" style="left:440.45px;top:784px;width:5.7px;height:14px;background:repeating-linear-gradient(180deg,#3a3a3a 0,#3a3a3a 1px,#1c1c1c 1px,#1c1c1c 2px)"></div>
<div class="txt" style="left:369.75px;top:775.2px;font-size:7.4px;color:#9c9c9c;width:200px;text-align:center;">18</div>
<div class="a" style="left:466.95px;top:784px;width:5.7px;height:14px;background:repeating-linear-gradient(180deg,#3a3a3a 0,#3a3a3a 1px,#1c1c1c 1px,#1c1c1c 2px)"></div>
<div class="txt" style="left:396.25px;top:775.2px;font-size:7.4px;color:#9c9c9c;width:200px;text-align:center;">19</div>
<div class="a" style="left:493.45px;top:784px;width:5.7px;height:14px;background:repeating-linear-gradient(180deg,#3a3a3a 0,#3a3a3a 1px,#1c1c1c 1px,#1c1c1c 2px)"></div>
<div class="txt" style="left:422.75px;top:775.2px;font-size:7.4px;color:#9c9c9c;width:200px;text-align:center;">20</div>
<div class="a" style="left:519.95px;top:784px;width:5.7px;height:14px;background:repeating-linear-gradient(180deg,#3a3a3a 0,#3a3a3a 1px,#1c1c1c 1px,#1c1c1c 2px)"></div>
<div class="txt" style="left:449.0px;top:775.2px;font-size:7.4px;color:#9c9c9c;width:200px;text-align:center;">21</div>
<div class="a" style="left:546.2px;top:784px;width:5.7px;height:14px;background:repeating-linear-gradient(180deg,#3a3a3a 0,#3a3a3a 1px,#1c1c1c 1px,#1c1c1c 2px)"></div>
<div class="txt" style="left:476.0px;top:775.2px;font-size:7.4px;color:#9c9c9c;width:200px;text-align:center;">22</div>
<div class="a" style="left:573.2px;top:784px;width:5.7px;height:14px;background:repeating-linear-gradient(180deg,#3a3a3a 0,#3a3a3a 1px,#1c1c1c 1px,#1c1c1c 2px)"></div>
<div class="txt" style="left:502.75px;top:775.2px;font-size:7.4px;color:#9c9c9c;width:200px;text-align:center;">23</div>
<div class="a" style="left:599.95px;top:784px;width:5.7px;height:14px;background:repeating-linear-gradient(180deg,#3a3a3a 0,#3a3a3a 1px,#1c1c1c 1px,#1c1c1c 2px)"></div>
<div class="txt" style="left:529.0px;top:775.2px;font-size:7.4px;color:#9c9c9c;width:200px;text-align:center;">24</div>
<div class="a" style="left:626.2px;top:784px;width:5.7px;height:14px;background:repeating-linear-gradient(180deg,#3a3a3a 0,#3a3a3a 1px,#1c1c1c 1px,#1c1c1c 2px)"></div>
<div class="txt" style="left:555.75px;top:775.2px;font-size:7.4px;color:#9c9c9c;width:200px;text-align:center;">25</div>
<div class="a" style="left:652.95px;top:784px;width:5.7px;height:14px;background:repeating-linear-gradient(180deg,#3a3a3a 0,#3a3a3a 1px,#1c1c1c 1px,#1c1c1c 2px)"></div>
<div class="txt" style="left:582.25px;top:775.2px;font-size:7.4px;color:#9c9c9c;width:200px;text-align:center;">26</div>
<div class="a" style="left:679.45px;top:784px;width:5.7px;height:14px;background:repeating-linear-gradient(180deg,#3a3a3a 0,#3a3a3a 1px,#1c1c1c 1px,#1c1c1c 2px)"></div>
<div class="txt" style="left:609.0px;top:775.2px;font-size:7.4px;color:#9c9c9c;width:200px;text-align:center;">27</div>
<div class="a" style="left:706.2px;top:784px;width:5.7px;height:14px;background:repeating-linear-gradient(180deg,#3a3a3a 0,#3a3a3a 1px,#1c1c1c 1px,#1c1c1c 2px)"></div>
<div class="txt" style="left:635.5px;top:775.2px;font-size:7.4px;color:#9c9c9c;width:200px;text-align:center;">28</div>
<div class="a" style="left:732.7px;top:784px;width:5.7px;height:14px;background:repeating-linear-gradient(180deg,#3a3a3a 0,#3a3a3a 1px,#1c1c1c 1px,#1c1c1c 2px)"></div>
<div class="txt" style="left:662.0px;top:775.2px;font-size:7.4px;color:#9c9c9c;width:200px;text-align:center;">29</div>
<div class="a" style="left:759.2px;top:784px;width:5.7px;height:14px;background:repeating-linear-gradient(180deg,#3a3a3a 0,#3a3a3a 1px,#1c1c1c 1px,#1c1c1c 2px)"></div>
<div class="txt" style="left:688.5px;top:775.2px;font-size:7.4px;color:#9c9c9c;width:200px;text-align:center;">30</div>
<div class="a" style="left:785.7px;top:784px;width:5.7px;height:14px;background:repeating-linear-gradient(180deg,#3a3a3a 0,#3a3a3a 1px,#1c1c1c 1px,#1c1c1c 2px)"></div>
<div class="txt" style="left:715.25px;top:775.2px;font-size:7.4px;color:#9c9c9c;width:200px;text-align:center;">31</div>
<div class="a" style="left:812.45px;top:784px;width:5.7px;height:14px;background:repeating-linear-gradient(180deg,#3a3a3a 0,#3a3a3a 1px,#1c1c1c 1px,#1c1c1c 2px)"></div>
<div class="txt" style="left:741.75px;top:775.2px;font-size:7.4px;color:#9c9c9c;width:200px;text-align:center;">32</div>
<div class="a" style="left:838.95px;top:784px;width:5.7px;height:14px;background:repeating-linear-gradient(180deg,#3a3a3a 0,#3a3a3a 1px,#1c1c1c 1px,#1c1c1c 2px)"></div>
<div class="txt" style="left:768.5px;top:775.2px;font-size:7.4px;color:#9c9c9c;width:200px;text-align:center;">FX A</div>
<div class="a" style="left:865.7px;top:784px;width:5.7px;height:14px;background:repeating-linear-gradient(180deg,#3a3a3a 0,#3a3a3a 1px,#1c1c1c 1px,#1c1c1c 2px)"></div>
<div class="a" style="left:865.7px;top:792px;width:5.7px;height:6px;background:repeating-linear-gradient(180deg,#58bc4c 0,#58bc4c 1px,#3c9636 1px,#3c9636 2px)"></div>
<div class="txt" style="left:795.0px;top:775.2px;font-size:7.4px;color:#9c9c9c;width:200px;text-align:center;">FX B</div>
<div class="a" style="left:892.2px;top:784px;width:5.7px;height:14px;background:repeating-linear-gradient(180deg,#3a3a3a 0,#3a3a3a 1px,#1c1c1c 1px,#1c1c1c 2px)"></div>
<div class="txt" style="left:821.5px;top:775.2px;font-size:7.4px;color:#9c9c9c;width:200px;text-align:center;">FX C</div>
<div class="a" style="left:918.7px;top:784px;width:5.7px;height:14px;background:repeating-linear-gradient(180deg,#3a3a3a 0,#3a3a3a 1px,#1c1c1c 1px,#1c1c1c 2px)"></div>
<div class="txt" style="left:848.0px;top:775.2px;font-size:7.4px;color:#9c9c9c;width:200px;text-align:center;">FX D</div>
<div class="a" style="left:945.2px;top:784px;width:5.7px;height:14px;background:repeating-linear-gradient(180deg,#3a3a3a 0,#3a3a3a 1px,#1c1c1c 1px,#1c1c1c 2px)"></div>
<div class="txt" style="left:874.25px;top:775.2px;font-size:7.4px;color:#9c9c9c;width:200px;text-align:center;">A1</div>
<div class="a" style="left:971.45px;top:784px;width:5.7px;height:14px;background:repeating-linear-gradient(180deg,#3a3a3a 0,#3a3a3a 1px,#1c1c1c 1px,#1c1c1c 2px)"></div>
<div class="txt" style="left:901.0px;top:775.2px;font-size:7.4px;color:#9c9c9c;width:200px;text-align:center;">A2</div>
<div class="a" style="left:998.2px;top:784px;width:5.7px;height:14px;background:repeating-linear-gradient(180deg,#3a3a3a 0,#3a3a3a 1px,#1c1c1c 1px,#1c1c1c 2px)"></div>
<div class="txt" style="left:927.5px;top:775.2px;font-size:7.4px;color:#9c9c9c;width:200px;text-align:center;">Tape</div>
<div class="a" style="left:1024.7px;top:784px;width:5.7px;height:14px;background:repeating-linear-gradient(180deg,#3a3a3a 0,#3a3a3a 1px,#1c1c1c 1px,#1c1c1c 2px)"></div>
<div class="a" style="left:1024.7px;top:785.4px;width:5.7px;height:1.6px;background:#d9a55e"></div>
<div class="a" style="left:1024.7px;top:787px;width:5.7px;height:11px;background:repeating-linear-gradient(180deg,#58bc4c 0,#58bc4c 1px,#3c9636 1px,#3c9636 2px)"></div>
<div class="txt" style="left:954.25px;top:775.2px;font-size:7.4px;color:#9c9c9c;width:200px;text-align:center;">TB</div>
<div class="a" style="left:143px;top:772.5px;width:14.5px;height:26.5px;border:1.2px solid #8a8a8a;border-radius:1px"></div>
</body></html>
